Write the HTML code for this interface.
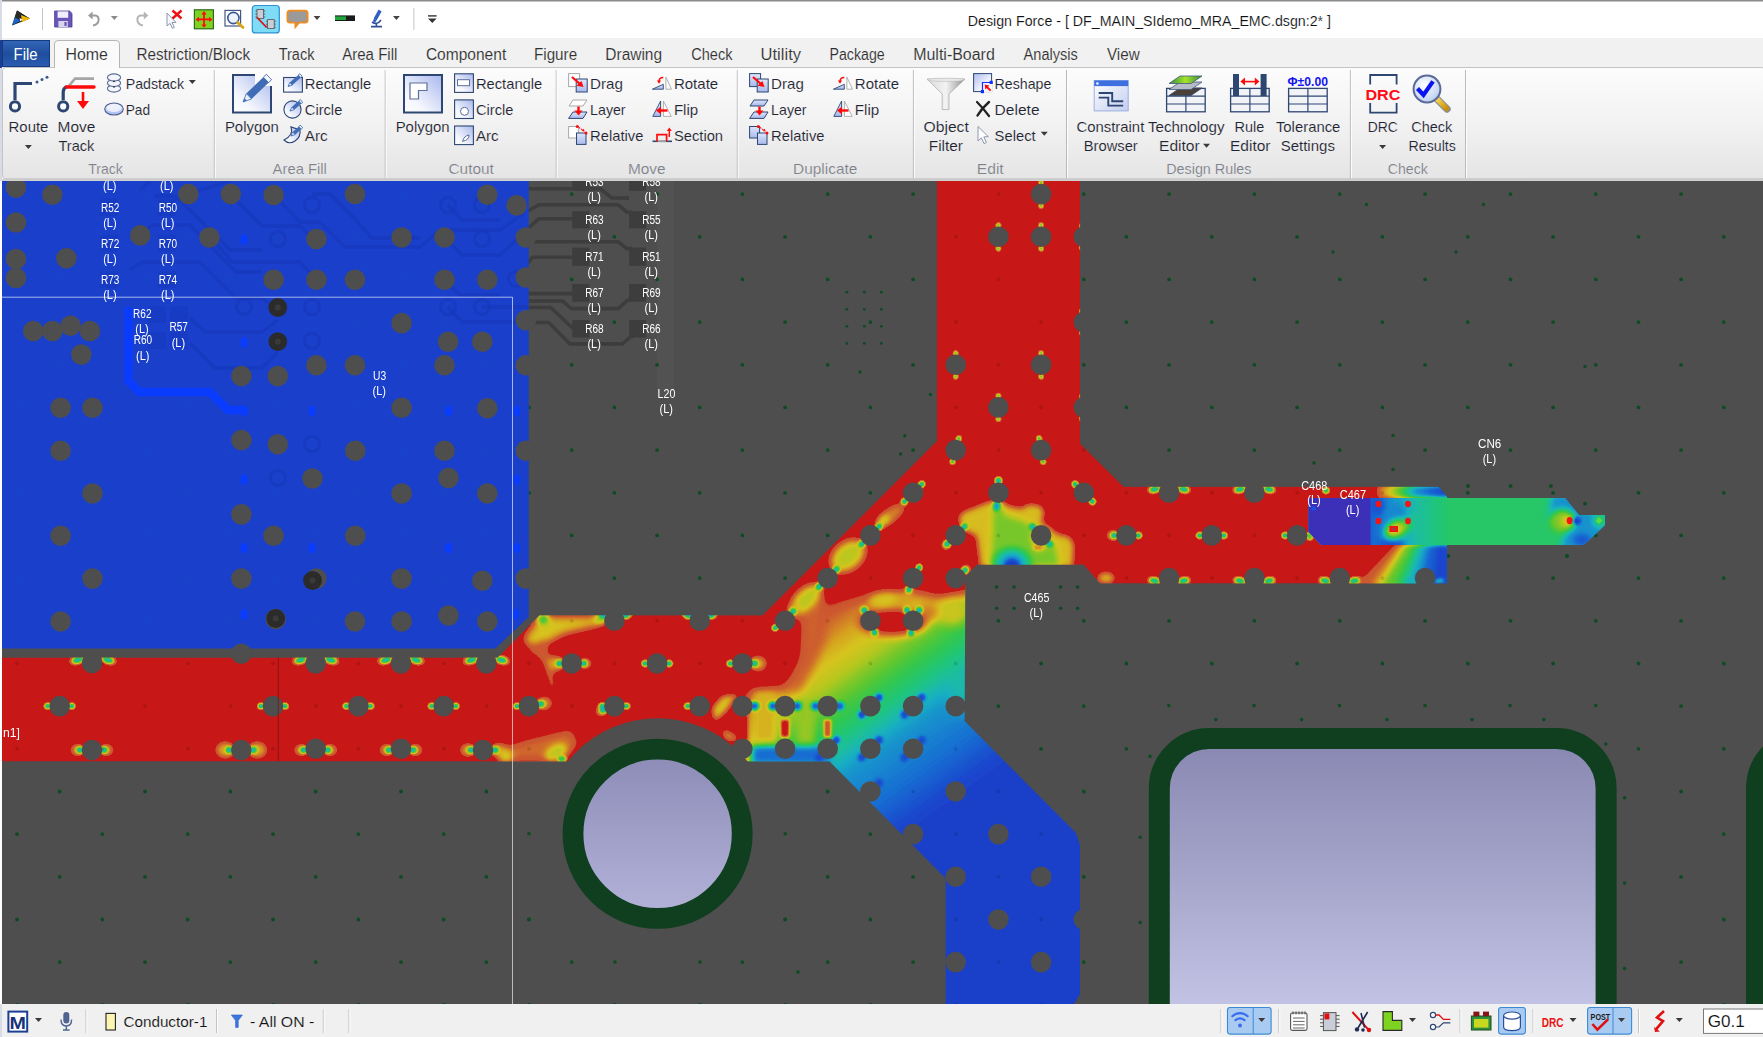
<!DOCTYPE html>
<html><head><meta charset="utf-8"><title>Design Force</title>
<style>
html,body{margin:0;padding:0;}
body{width:1763px;height:1037px;overflow:hidden;position:relative;background:#fff;font-family:"Liberation Sans",sans-serif;}
.abs{position:absolute}


</style></head><body>
<svg class="abs" style="left:0;top:0" width="1763" height="1037" viewBox="0 0 1763 1037">
<defs>
<clipPath id="cv"><rect x="2" y="180.5" width="1761" height="823.5"/></clipPath>
<clipPath id="redc"><polygon points="2,657.5 497.6,657.5 539.4,615.2 762.5,615.2 936.8,440.9 936.8,180 1080.2,180 1080.2,443.7 1123.8,486.8 1438.7,486.8 1447,496.4 1447,583.4 1100,583.4 1083.5,564.8 977,564.8 965.4,576.5 964.6,721 1076,833 1080,845 1080,994 1074,1004 945.7,1004 945.7,878.5 829.6,761.6 2,761.6"/></clipPath>
<clipPath id="bluec"><polygon points="2,180 528.8,180 528.8,617 495.5,648.4 2,648.4"/></clipPath>
<linearGradient id="lav" gradientUnits="userSpaceOnUse" x1="0" y1="749" x2="0" y2="1004"><stop offset="0" stop-color="#8989b3"/><stop offset="1" stop-color="#c2c2e4"/></linearGradient>
<linearGradient id="lav2" gradientUnits="userSpaceOnUse" x1="0" y1="759" x2="0" y2="908"><stop offset="0" stop-color="#8d8db8"/><stop offset="1" stop-color="#b1b1d8"/></linearGradient>
<filter id="b3" x="-50%" y="-50%" width="200%" height="200%"><feGaussianBlur stdDeviation="3"/></filter>
<filter id="b5" x="-50%" y="-50%" width="200%" height="200%"><feGaussianBlur stdDeviation="5"/></filter>
<filter id="b8" x="-50%" y="-50%" width="200%" height="200%"><feGaussianBlur stdDeviation="8"/></filter>
<filter id="b12" x="-50%" y="-50%" width="200%" height="200%"><feGaussianBlur stdDeviation="12"/></filter>
<filter id="b2" x="-50%" y="-50%" width="200%" height="200%"><feGaussianBlur stdDeviation="1.6"/></filter>
<filter id="cm" x="0" y="0" width="1763" height="1037" filterUnits="userSpaceOnUse" color-interpolation-filters="sRGB"><feComponentTransfer><feFuncR type="table" tableValues="0.102 0.102 0.102 0.102 0.102 0.102 0.102 0.102 0.102 0.102 0.102 0.102 0.102 0.102 0.102 0.102 0.102 0.102 0.102 0.102 0.102 0.102 0.102 0.102 0.102 0.101 0.101 0.100 0.100 0.100 0.099 0.099 0.098 0.098 0.097 0.097 0.096 0.096 0.095 0.095 0.094 0.094 0.094 0.094 0.094 0.094 0.094 0.094 0.094 0.094 0.094 0.094 0.094 0.094 0.094 0.094 0.094 0.094 0.094 0.094 0.094 0.094 0.094 0.094 0.094 0.094 0.094 0.094 0.094 0.094 0.094 0.096 0.097 0.099 0.100 0.102 0.104 0.105 0.107 0.108 0.110 0.111 0.113 0.115 0.116 0.118 0.119 0.121 0.122 0.124 0.125 0.133 0.140 0.147 0.154 0.161 0.168 0.175 0.182 0.189 0.196 0.212 0.227 0.243 0.259 0.275 0.290 0.306 0.322 0.337 0.353 0.369 0.384 0.400 0.416 0.431 0.447 0.463 0.478 0.494 0.510 0.529 0.549 0.569 0.588 0.608 0.627 0.647 0.667 0.686 0.706 0.720 0.733 0.747 0.761 0.775 0.788 0.802 0.816 0.829 0.843 0.843 0.843 0.843 0.843 0.843 0.843 0.843 0.843 0.843 0.843 0.841 0.839 0.837 0.835 0.833 0.831 0.829 0.827 0.825 0.824 0.821 0.819 0.816 0.814 0.811 0.809 0.806 0.804 0.803 0.802 0.801 0.800 0.800 0.799 0.798 0.797 0.796 0.792 0.788 0.784 0.784 0.784 0.784 0.784 0.784 0.784 0.784 0.784 0.784 0.784 0.784 0.784 0.784 0.784 0.784 0.784 0.784 0.784 0.784 0.784"/><feFuncG type="table" tableValues="0.251 0.251 0.251 0.251 0.251 0.251 0.251 0.251 0.251 0.251 0.251 0.251 0.251 0.255 0.259 0.263 0.267 0.271 0.275 0.278 0.282 0.286 0.290 0.294 0.298 0.304 0.310 0.316 0.322 0.327 0.333 0.339 0.345 0.351 0.357 0.363 0.369 0.375 0.380 0.386 0.392 0.402 0.412 0.422 0.431 0.441 0.451 0.461 0.471 0.480 0.490 0.500 0.510 0.520 0.529 0.539 0.549 0.559 0.569 0.578 0.588 0.598 0.608 0.618 0.627 0.637 0.647 0.657 0.667 0.676 0.686 0.692 0.698 0.704 0.710 0.716 0.722 0.727 0.733 0.739 0.745 0.748 0.751 0.755 0.758 0.761 0.764 0.767 0.770 0.773 0.776 0.777 0.778 0.779 0.780 0.780 0.781 0.782 0.783 0.784 0.784 0.784 0.784 0.784 0.784 0.784 0.784 0.784 0.784 0.784 0.784 0.784 0.784 0.784 0.784 0.784 0.784 0.784 0.784 0.784 0.784 0.784 0.784 0.784 0.784 0.784 0.784 0.784 0.784 0.784 0.784 0.782 0.780 0.778 0.776 0.775 0.773 0.771 0.769 0.767 0.765 0.751 0.737 0.724 0.710 0.696 0.682 0.669 0.655 0.641 0.627 0.612 0.596 0.580 0.565 0.549 0.533 0.518 0.502 0.486 0.471 0.456 0.441 0.426 0.412 0.397 0.382 0.368 0.353 0.350 0.348 0.345 0.342 0.340 0.337 0.335 0.332 0.329 0.251 0.173 0.094 0.094 0.094 0.094 0.094 0.094 0.094 0.094 0.094 0.094 0.094 0.094 0.094 0.094 0.094 0.094 0.094 0.094 0.094 0.094 0.094"/><feFuncB type="table" tableValues="0.796 0.796 0.796 0.796 0.796 0.796 0.796 0.796 0.796 0.796 0.796 0.796 0.796 0.797 0.798 0.799 0.800 0.801 0.802 0.803 0.804 0.805 0.806 0.807 0.808 0.809 0.810 0.811 0.812 0.813 0.814 0.815 0.816 0.817 0.818 0.819 0.820 0.821 0.822 0.823 0.824 0.823 0.822 0.822 0.821 0.821 0.820 0.820 0.819 0.818 0.818 0.817 0.817 0.816 0.816 0.812 0.809 0.806 0.803 0.800 0.797 0.793 0.790 0.787 0.784 0.781 0.777 0.774 0.771 0.768 0.765 0.751 0.737 0.724 0.710 0.696 0.682 0.669 0.655 0.641 0.627 0.612 0.596 0.580 0.565 0.549 0.533 0.518 0.502 0.486 0.471 0.455 0.439 0.424 0.408 0.392 0.376 0.361 0.345 0.329 0.314 0.302 0.290 0.278 0.267 0.255 0.243 0.231 0.220 0.208 0.196 0.192 0.188 0.184 0.180 0.176 0.173 0.169 0.165 0.161 0.157 0.153 0.149 0.145 0.141 0.137 0.133 0.129 0.125 0.122 0.118 0.118 0.118 0.118 0.118 0.118 0.118 0.118 0.118 0.118 0.118 0.118 0.119 0.120 0.121 0.122 0.122 0.123 0.124 0.125 0.125 0.129 0.132 0.135 0.138 0.141 0.144 0.147 0.151 0.154 0.157 0.161 0.165 0.169 0.173 0.176 0.180 0.184 0.188 0.188 0.188 0.188 0.188 0.188 0.188 0.188 0.188 0.188 0.157 0.125 0.094 0.094 0.094 0.094 0.094 0.094 0.094 0.094 0.094 0.094 0.094 0.094 0.094 0.094 0.094 0.094 0.094 0.094 0.094 0.094 0.094"/></feComponentTransfer></filter>
</defs>
<g clip-path="url(#cv)">
<rect x="0" y="180.5" width="1763" height="823.5" fill="#4e4e4e"/>
<rect x="657" y="181" width="17" height="215" fill="#525252"/><rect x="572.2" y="178" width="17.2" height="12.8" fill="#3d3d3d"/><rect x="572.2" y="211.2" width="17.2" height="17.1" fill="#3d3d3d"/><rect x="572.2" y="247.6" width="17.2" height="18.2" fill="#3d3d3d"/><rect x="572.2" y="284" width="17.2" height="17.7" fill="#3d3d3d"/><rect x="572.2" y="320" width="17.2" height="17.5" fill="#3d3d3d"/><rect x="629" y="178" width="17.2" height="12.8" fill="#3d3d3d"/><rect x="629" y="211.2" width="17.2" height="17.1" fill="#3d3d3d"/><rect x="629" y="247.6" width="17.2" height="18.2" fill="#3d3d3d"/><rect x="629" y="284" width="17.2" height="17.7" fill="#3d3d3d"/><rect x="629" y="320" width="17.2" height="17.5" fill="#3d3d3d"/><polyline points="487.3,194.7 498.4,188.7 572,188.7" fill="none" stroke="#3d3d3d" stroke-width="3.6" stroke-linejoin="round"/><polyline points="524,213.3 539,204.8 618.3,204.8 626.8,212.2 632,212.2" fill="none" stroke="#3d3d3d" stroke-width="3.6" stroke-linejoin="round"/><polyline points="520.9,234.7 539,218.7 574,218.7" fill="none" stroke="#3d3d3d" stroke-width="3.6" stroke-linejoin="round"/><polyline points="524,247.6 530.5,241.8 618.3,241.8 626.8,248.6 632,248.6" fill="none" stroke="#3d3d3d" stroke-width="3.6" stroke-linejoin="round"/><polyline points="521,272 532.6,257.2 574,257.2" fill="none" stroke="#3d3d3d" stroke-width="3.6" stroke-linejoin="round"/><polyline points="489.8,278.6 502.7,293.6 574,293.6" fill="none" stroke="#3d3d3d" stroke-width="3.6" stroke-linejoin="round"/><polyline points="528.4,301 562.6,301 571.2,308.6 618.3,308.6 627.9,300 632,300" fill="none" stroke="#3d3d3d" stroke-width="3.6" stroke-linejoin="round"/><polyline points="528.4,307.5 550.8,307.5 572.2,327.8 576,327.8" fill="none" stroke="#3d3d3d" stroke-width="3.6" stroke-linejoin="round"/><polyline points="520.9,322.5 548.7,322.5 570,343.9 622.5,343.9 631,336.4 634,336.4" fill="none" stroke="#3d3d3d" stroke-width="3.6" stroke-linejoin="round"/><polyline points="589,188.7 600,188.7 612,198 629,198" fill="none" stroke="#3d3d3d" stroke-width="3.6" stroke-linejoin="round"/>
<g fill="#0e4a24"><circle cx="17.0" cy="151.4" r="1.9"/><circle cx="102.3" cy="151.4" r="1.9"/><circle cx="187.7" cy="151.4" r="1.9"/><circle cx="273.0" cy="151.4" r="1.9"/><circle cx="358.4" cy="151.4" r="1.9"/><circle cx="443.7" cy="151.4" r="1.9"/><circle cx="529.0" cy="151.4" r="1.9"/><circle cx="614.4" cy="151.4" r="1.9"/><circle cx="699.7" cy="151.4" r="1.9"/><circle cx="785.1" cy="151.4" r="1.9"/><circle cx="870.4" cy="151.4" r="1.9"/><circle cx="955.7" cy="151.4" r="1.9"/><circle cx="1041.1" cy="151.4" r="1.9"/><circle cx="1126.4" cy="151.4" r="1.9"/><circle cx="1211.8" cy="151.4" r="1.9"/><circle cx="1297.1" cy="151.4" r="1.9"/><circle cx="1382.4" cy="151.4" r="1.9"/><circle cx="1467.8" cy="151.4" r="1.9"/><circle cx="1553.1" cy="151.4" r="1.9"/><circle cx="1638.5" cy="151.4" r="1.9"/><circle cx="1723.8" cy="151.4" r="1.9"/><circle cx="59.7" cy="194.1" r="1.9"/><circle cx="145.0" cy="194.1" r="1.9"/><circle cx="230.4" cy="194.1" r="1.9"/><circle cx="315.7" cy="194.1" r="1.9"/><circle cx="401.0" cy="194.1" r="1.9"/><circle cx="486.4" cy="194.1" r="1.9"/><circle cx="571.7" cy="194.1" r="1.9"/><circle cx="657.1" cy="194.1" r="1.9"/><circle cx="742.4" cy="194.1" r="1.9"/><circle cx="827.7" cy="194.1" r="1.9"/><circle cx="913.1" cy="194.1" r="1.9"/><circle cx="998.4" cy="194.1" r="1.9"/><circle cx="1083.8" cy="194.1" r="1.9"/><circle cx="1169.1" cy="194.1" r="1.9"/><circle cx="1254.4" cy="194.1" r="1.9"/><circle cx="1339.8" cy="194.1" r="1.9"/><circle cx="1425.1" cy="194.1" r="1.9"/><circle cx="1510.5" cy="194.1" r="1.9"/><circle cx="1595.8" cy="194.1" r="1.9"/><circle cx="1681.1" cy="194.1" r="1.9"/><circle cx="1766.5" cy="194.1" r="1.9"/><circle cx="17.0" cy="236.8" r="1.9"/><circle cx="102.3" cy="236.8" r="1.9"/><circle cx="187.7" cy="236.8" r="1.9"/><circle cx="273.0" cy="236.8" r="1.9"/><circle cx="358.4" cy="236.8" r="1.9"/><circle cx="443.7" cy="236.8" r="1.9"/><circle cx="529.0" cy="236.8" r="1.9"/><circle cx="614.4" cy="236.8" r="1.9"/><circle cx="699.7" cy="236.8" r="1.9"/><circle cx="785.1" cy="236.8" r="1.9"/><circle cx="870.4" cy="236.8" r="1.9"/><circle cx="955.7" cy="236.8" r="1.9"/><circle cx="1041.1" cy="236.8" r="1.9"/><circle cx="1126.4" cy="236.8" r="1.9"/><circle cx="1211.8" cy="236.8" r="1.9"/><circle cx="1297.1" cy="236.8" r="1.9"/><circle cx="1382.4" cy="236.8" r="1.9"/><circle cx="1467.8" cy="236.8" r="1.9"/><circle cx="1553.1" cy="236.8" r="1.9"/><circle cx="1638.5" cy="236.8" r="1.9"/><circle cx="1723.8" cy="236.8" r="1.9"/><circle cx="59.7" cy="279.4" r="1.9"/><circle cx="145.0" cy="279.4" r="1.9"/><circle cx="230.4" cy="279.4" r="1.9"/><circle cx="315.7" cy="279.4" r="1.9"/><circle cx="401.0" cy="279.4" r="1.9"/><circle cx="486.4" cy="279.4" r="1.9"/><circle cx="571.7" cy="279.4" r="1.9"/><circle cx="657.1" cy="279.4" r="1.9"/><circle cx="742.4" cy="279.4" r="1.9"/><circle cx="827.7" cy="279.4" r="1.9"/><circle cx="913.1" cy="279.4" r="1.9"/><circle cx="998.4" cy="279.4" r="1.9"/><circle cx="1083.8" cy="279.4" r="1.9"/><circle cx="1169.1" cy="279.4" r="1.9"/><circle cx="1254.4" cy="279.4" r="1.9"/><circle cx="1339.8" cy="279.4" r="1.9"/><circle cx="1425.1" cy="279.4" r="1.9"/><circle cx="1510.5" cy="279.4" r="1.9"/><circle cx="1595.8" cy="279.4" r="1.9"/><circle cx="1681.1" cy="279.4" r="1.9"/><circle cx="1766.5" cy="279.4" r="1.9"/><circle cx="17.0" cy="322.1" r="1.9"/><circle cx="102.3" cy="322.1" r="1.9"/><circle cx="187.7" cy="322.1" r="1.9"/><circle cx="273.0" cy="322.1" r="1.9"/><circle cx="358.4" cy="322.1" r="1.9"/><circle cx="443.7" cy="322.1" r="1.9"/><circle cx="529.0" cy="322.1" r="1.9"/><circle cx="614.4" cy="322.1" r="1.9"/><circle cx="699.7" cy="322.1" r="1.9"/><circle cx="785.1" cy="322.1" r="1.9"/><circle cx="870.4" cy="322.1" r="1.9"/><circle cx="955.7" cy="322.1" r="1.9"/><circle cx="1041.1" cy="322.1" r="1.9"/><circle cx="1126.4" cy="322.1" r="1.9"/><circle cx="1211.8" cy="322.1" r="1.9"/><circle cx="1297.1" cy="322.1" r="1.9"/><circle cx="1382.4" cy="322.1" r="1.9"/><circle cx="1467.8" cy="322.1" r="1.9"/><circle cx="1553.1" cy="322.1" r="1.9"/><circle cx="1638.5" cy="322.1" r="1.9"/><circle cx="1723.8" cy="322.1" r="1.9"/><circle cx="59.7" cy="364.8" r="1.9"/><circle cx="145.0" cy="364.8" r="1.9"/><circle cx="230.4" cy="364.8" r="1.9"/><circle cx="315.7" cy="364.8" r="1.9"/><circle cx="401.0" cy="364.8" r="1.9"/><circle cx="486.4" cy="364.8" r="1.9"/><circle cx="571.7" cy="364.8" r="1.9"/><circle cx="657.1" cy="364.8" r="1.9"/><circle cx="742.4" cy="364.8" r="1.9"/><circle cx="827.7" cy="364.8" r="1.9"/><circle cx="913.1" cy="364.8" r="1.9"/><circle cx="998.4" cy="364.8" r="1.9"/><circle cx="1083.8" cy="364.8" r="1.9"/><circle cx="1169.1" cy="364.8" r="1.9"/><circle cx="1254.4" cy="364.8" r="1.9"/><circle cx="1339.8" cy="364.8" r="1.9"/><circle cx="1425.1" cy="364.8" r="1.9"/><circle cx="1510.5" cy="364.8" r="1.9"/><circle cx="1595.8" cy="364.8" r="1.9"/><circle cx="1681.1" cy="364.8" r="1.9"/><circle cx="1766.5" cy="364.8" r="1.9"/><circle cx="17.0" cy="407.4" r="1.9"/><circle cx="102.3" cy="407.4" r="1.9"/><circle cx="187.7" cy="407.4" r="1.9"/><circle cx="273.0" cy="407.4" r="1.9"/><circle cx="358.4" cy="407.4" r="1.9"/><circle cx="443.7" cy="407.4" r="1.9"/><circle cx="529.0" cy="407.4" r="1.9"/><circle cx="614.4" cy="407.4" r="1.9"/><circle cx="699.7" cy="407.4" r="1.9"/><circle cx="785.1" cy="407.4" r="1.9"/><circle cx="870.4" cy="407.4" r="1.9"/><circle cx="955.7" cy="407.4" r="1.9"/><circle cx="1041.1" cy="407.4" r="1.9"/><circle cx="1126.4" cy="407.4" r="1.9"/><circle cx="1211.8" cy="407.4" r="1.9"/><circle cx="1297.1" cy="407.4" r="1.9"/><circle cx="1382.4" cy="407.4" r="1.9"/><circle cx="1467.8" cy="407.4" r="1.9"/><circle cx="1553.1" cy="407.4" r="1.9"/><circle cx="1638.5" cy="407.4" r="1.9"/><circle cx="1723.8" cy="407.4" r="1.9"/><circle cx="59.7" cy="450.1" r="1.9"/><circle cx="145.0" cy="450.1" r="1.9"/><circle cx="230.4" cy="450.1" r="1.9"/><circle cx="315.7" cy="450.1" r="1.9"/><circle cx="401.0" cy="450.1" r="1.9"/><circle cx="486.4" cy="450.1" r="1.9"/><circle cx="571.7" cy="450.1" r="1.9"/><circle cx="657.1" cy="450.1" r="1.9"/><circle cx="742.4" cy="450.1" r="1.9"/><circle cx="827.7" cy="450.1" r="1.9"/><circle cx="913.1" cy="450.1" r="1.9"/><circle cx="998.4" cy="450.1" r="1.9"/><circle cx="1083.8" cy="450.1" r="1.9"/><circle cx="1169.1" cy="450.1" r="1.9"/><circle cx="1254.4" cy="450.1" r="1.9"/><circle cx="1339.8" cy="450.1" r="1.9"/><circle cx="1425.1" cy="450.1" r="1.9"/><circle cx="1510.5" cy="450.1" r="1.9"/><circle cx="1595.8" cy="450.1" r="1.9"/><circle cx="1681.1" cy="450.1" r="1.9"/><circle cx="1766.5" cy="450.1" r="1.9"/><circle cx="17.0" cy="492.8" r="1.9"/><circle cx="102.3" cy="492.8" r="1.9"/><circle cx="187.7" cy="492.8" r="1.9"/><circle cx="273.0" cy="492.8" r="1.9"/><circle cx="358.4" cy="492.8" r="1.9"/><circle cx="443.7" cy="492.8" r="1.9"/><circle cx="529.0" cy="492.8" r="1.9"/><circle cx="614.4" cy="492.8" r="1.9"/><circle cx="699.7" cy="492.8" r="1.9"/><circle cx="785.1" cy="492.8" r="1.9"/><circle cx="870.4" cy="492.8" r="1.9"/><circle cx="955.7" cy="492.8" r="1.9"/><circle cx="1041.1" cy="492.8" r="1.9"/><circle cx="1126.4" cy="492.8" r="1.9"/><circle cx="1211.8" cy="492.8" r="1.9"/><circle cx="1297.1" cy="492.8" r="1.9"/><circle cx="1382.4" cy="492.8" r="1.9"/><circle cx="1467.8" cy="492.8" r="1.9"/><circle cx="1553.1" cy="492.8" r="1.9"/><circle cx="1638.5" cy="492.8" r="1.9"/><circle cx="1723.8" cy="492.8" r="1.9"/><circle cx="59.7" cy="535.4" r="1.9"/><circle cx="145.0" cy="535.4" r="1.9"/><circle cx="230.4" cy="535.4" r="1.9"/><circle cx="315.7" cy="535.4" r="1.9"/><circle cx="401.0" cy="535.4" r="1.9"/><circle cx="486.4" cy="535.4" r="1.9"/><circle cx="571.7" cy="535.4" r="1.9"/><circle cx="657.1" cy="535.4" r="1.9"/><circle cx="742.4" cy="535.4" r="1.9"/><circle cx="827.7" cy="535.4" r="1.9"/><circle cx="913.1" cy="535.4" r="1.9"/><circle cx="998.4" cy="535.4" r="1.9"/><circle cx="1083.8" cy="535.4" r="1.9"/><circle cx="1169.1" cy="535.4" r="1.9"/><circle cx="1254.4" cy="535.4" r="1.9"/><circle cx="1339.8" cy="535.4" r="1.9"/><circle cx="1425.1" cy="535.4" r="1.9"/><circle cx="1510.5" cy="535.4" r="1.9"/><circle cx="1595.8" cy="535.4" r="1.9"/><circle cx="1681.1" cy="535.4" r="1.9"/><circle cx="1766.5" cy="535.4" r="1.9"/><circle cx="17.0" cy="578.1" r="1.9"/><circle cx="102.3" cy="578.1" r="1.9"/><circle cx="187.7" cy="578.1" r="1.9"/><circle cx="273.0" cy="578.1" r="1.9"/><circle cx="358.4" cy="578.1" r="1.9"/><circle cx="443.7" cy="578.1" r="1.9"/><circle cx="529.0" cy="578.1" r="1.9"/><circle cx="614.4" cy="578.1" r="1.9"/><circle cx="699.7" cy="578.1" r="1.9"/><circle cx="785.1" cy="578.1" r="1.9"/><circle cx="870.4" cy="578.1" r="1.9"/><circle cx="955.7" cy="578.1" r="1.9"/><circle cx="1126.4" cy="578.1" r="1.9"/><circle cx="1211.8" cy="578.1" r="1.9"/><circle cx="1297.1" cy="578.1" r="1.9"/><circle cx="1382.4" cy="578.1" r="1.9"/><circle cx="1467.8" cy="578.1" r="1.9"/><circle cx="1553.1" cy="578.1" r="1.9"/><circle cx="1638.5" cy="578.1" r="1.9"/><circle cx="1723.8" cy="578.1" r="1.9"/><circle cx="59.7" cy="620.8" r="1.9"/><circle cx="145.0" cy="620.8" r="1.9"/><circle cx="230.4" cy="620.8" r="1.9"/><circle cx="315.7" cy="620.8" r="1.9"/><circle cx="401.0" cy="620.8" r="1.9"/><circle cx="486.4" cy="620.8" r="1.9"/><circle cx="571.7" cy="620.8" r="1.9"/><circle cx="657.1" cy="620.8" r="1.9"/><circle cx="742.4" cy="620.8" r="1.9"/><circle cx="827.7" cy="620.8" r="1.9"/><circle cx="913.1" cy="620.8" r="1.9"/><circle cx="998.4" cy="620.8" r="1.9"/><circle cx="1083.8" cy="620.8" r="1.9"/><circle cx="1169.1" cy="620.8" r="1.9"/><circle cx="1254.4" cy="620.8" r="1.9"/><circle cx="1339.8" cy="620.8" r="1.9"/><circle cx="1425.1" cy="620.8" r="1.9"/><circle cx="1510.5" cy="620.8" r="1.9"/><circle cx="1595.8" cy="620.8" r="1.9"/><circle cx="1681.1" cy="620.8" r="1.9"/><circle cx="1766.5" cy="620.8" r="1.9"/><circle cx="17.0" cy="663.5" r="1.9"/><circle cx="102.3" cy="663.5" r="1.9"/><circle cx="187.7" cy="663.5" r="1.9"/><circle cx="273.0" cy="663.5" r="1.9"/><circle cx="358.4" cy="663.5" r="1.9"/><circle cx="443.7" cy="663.5" r="1.9"/><circle cx="529.0" cy="663.5" r="1.9"/><circle cx="614.4" cy="663.5" r="1.9"/><circle cx="699.7" cy="663.5" r="1.9"/><circle cx="785.1" cy="663.5" r="1.9"/><circle cx="870.4" cy="663.5" r="1.9"/><circle cx="955.7" cy="663.5" r="1.9"/><circle cx="1041.1" cy="663.5" r="1.9"/><circle cx="1126.4" cy="663.5" r="1.9"/><circle cx="1211.8" cy="663.5" r="1.9"/><circle cx="1297.1" cy="663.5" r="1.9"/><circle cx="1382.4" cy="663.5" r="1.9"/><circle cx="1467.8" cy="663.5" r="1.9"/><circle cx="1553.1" cy="663.5" r="1.9"/><circle cx="1638.5" cy="663.5" r="1.9"/><circle cx="1723.8" cy="663.5" r="1.9"/><circle cx="59.7" cy="706.1" r="1.9"/><circle cx="145.0" cy="706.1" r="1.9"/><circle cx="230.4" cy="706.1" r="1.9"/><circle cx="315.7" cy="706.1" r="1.9"/><circle cx="401.0" cy="706.1" r="1.9"/><circle cx="486.4" cy="706.1" r="1.9"/><circle cx="571.7" cy="706.1" r="1.9"/><circle cx="742.4" cy="706.1" r="1.9"/><circle cx="827.7" cy="706.1" r="1.9"/><circle cx="913.1" cy="706.1" r="1.9"/><circle cx="998.4" cy="706.1" r="1.9"/><circle cx="1083.8" cy="706.1" r="1.9"/><circle cx="1681.1" cy="706.1" r="1.9"/><circle cx="1766.5" cy="706.1" r="1.9"/><circle cx="17.0" cy="748.8" r="1.9"/><circle cx="102.3" cy="748.8" r="1.9"/><circle cx="187.7" cy="748.8" r="1.9"/><circle cx="273.0" cy="748.8" r="1.9"/><circle cx="358.4" cy="748.8" r="1.9"/><circle cx="443.7" cy="748.8" r="1.9"/><circle cx="529.0" cy="748.8" r="1.9"/><circle cx="785.1" cy="748.8" r="1.9"/><circle cx="870.4" cy="748.8" r="1.9"/><circle cx="955.7" cy="748.8" r="1.9"/><circle cx="1041.1" cy="748.8" r="1.9"/><circle cx="1723.8" cy="748.8" r="1.9"/><circle cx="59.7" cy="791.5" r="1.9"/><circle cx="145.0" cy="791.5" r="1.9"/><circle cx="230.4" cy="791.5" r="1.9"/><circle cx="315.7" cy="791.5" r="1.9"/><circle cx="401.0" cy="791.5" r="1.9"/><circle cx="486.4" cy="791.5" r="1.9"/><circle cx="827.7" cy="791.5" r="1.9"/><circle cx="913.1" cy="791.5" r="1.9"/><circle cx="998.4" cy="791.5" r="1.9"/><circle cx="1083.8" cy="791.5" r="1.9"/><circle cx="1681.1" cy="791.5" r="1.9"/><circle cx="1766.5" cy="791.5" r="1.9"/><circle cx="17.0" cy="834.1" r="1.9"/><circle cx="102.3" cy="834.1" r="1.9"/><circle cx="187.7" cy="834.1" r="1.9"/><circle cx="273.0" cy="834.1" r="1.9"/><circle cx="358.4" cy="834.1" r="1.9"/><circle cx="443.7" cy="834.1" r="1.9"/><circle cx="870.4" cy="834.1" r="1.9"/><circle cx="955.7" cy="834.1" r="1.9"/><circle cx="1041.1" cy="834.1" r="1.9"/><circle cx="1723.8" cy="834.1" r="1.9"/><circle cx="59.7" cy="876.8" r="1.9"/><circle cx="145.0" cy="876.8" r="1.9"/><circle cx="230.4" cy="876.8" r="1.9"/><circle cx="315.7" cy="876.8" r="1.9"/><circle cx="401.0" cy="876.8" r="1.9"/><circle cx="486.4" cy="876.8" r="1.9"/><circle cx="827.7" cy="876.8" r="1.9"/><circle cx="913.1" cy="876.8" r="1.9"/><circle cx="998.4" cy="876.8" r="1.9"/><circle cx="1083.8" cy="876.8" r="1.9"/><circle cx="1681.1" cy="876.8" r="1.9"/><circle cx="1766.5" cy="876.8" r="1.9"/><circle cx="17.0" cy="919.5" r="1.9"/><circle cx="102.3" cy="919.5" r="1.9"/><circle cx="187.7" cy="919.5" r="1.9"/><circle cx="273.0" cy="919.5" r="1.9"/><circle cx="358.4" cy="919.5" r="1.9"/><circle cx="443.7" cy="919.5" r="1.9"/><circle cx="529.0" cy="919.5" r="1.9"/><circle cx="785.1" cy="919.5" r="1.9"/><circle cx="870.4" cy="919.5" r="1.9"/><circle cx="955.7" cy="919.5" r="1.9"/><circle cx="1041.1" cy="919.5" r="1.9"/><circle cx="1723.8" cy="919.5" r="1.9"/><circle cx="59.7" cy="962.1" r="1.9"/><circle cx="145.0" cy="962.1" r="1.9"/><circle cx="230.4" cy="962.1" r="1.9"/><circle cx="315.7" cy="962.1" r="1.9"/><circle cx="401.0" cy="962.1" r="1.9"/><circle cx="486.4" cy="962.1" r="1.9"/><circle cx="571.7" cy="962.1" r="1.9"/><circle cx="742.4" cy="962.1" r="1.9"/><circle cx="827.7" cy="962.1" r="1.9"/><circle cx="913.1" cy="962.1" r="1.9"/><circle cx="998.4" cy="962.1" r="1.9"/><circle cx="1083.8" cy="962.1" r="1.9"/><circle cx="1681.1" cy="962.1" r="1.9"/><circle cx="1766.5" cy="962.1" r="1.9"/><circle cx="17.0" cy="1004.8" r="1.9"/><circle cx="102.3" cy="1004.8" r="1.9"/><circle cx="187.7" cy="1004.8" r="1.9"/><circle cx="273.0" cy="1004.8" r="1.9"/><circle cx="358.4" cy="1004.8" r="1.9"/><circle cx="443.7" cy="1004.8" r="1.9"/><circle cx="529.0" cy="1004.8" r="1.9"/><circle cx="614.4" cy="1004.8" r="1.9"/><circle cx="699.7" cy="1004.8" r="1.9"/><circle cx="785.1" cy="1004.8" r="1.9"/><circle cx="870.4" cy="1004.8" r="1.9"/><circle cx="955.7" cy="1004.8" r="1.9"/><circle cx="1041.1" cy="1004.8" r="1.9"/><circle cx="1723.8" cy="1004.8" r="1.9"/><circle cx="846.9" cy="292.2" r="1.4"/><circle cx="846.9" cy="309.3" r="1.4"/><circle cx="846.9" cy="326.3" r="1.4"/><circle cx="846.9" cy="343.4" r="1.4"/><circle cx="864.3" cy="292.2" r="1.4"/><circle cx="864.3" cy="309.3" r="1.4"/><circle cx="864.3" cy="326.3" r="1.4"/><circle cx="864.3" cy="343.4" r="1.4"/><circle cx="881.4" cy="292.2" r="1.4"/><circle cx="881.4" cy="309.3" r="1.4"/><circle cx="881.4" cy="326.3" r="1.4"/><circle cx="881.4" cy="343.4" r="1.4"/><circle cx="996.6" cy="587" r="1.8"/><circle cx="996.6" cy="608.2" r="1.8"/><circle cx="1014" cy="587" r="1.8"/><circle cx="1014" cy="608.2" r="1.8"/><circle cx="1060.6" cy="587" r="1.8"/><circle cx="1060.6" cy="608.2" r="1.8"/><circle cx="1077.6" cy="587" r="1.8"/><circle cx="1077.6" cy="608.2" r="1.8"/><circle cx="1215.8" cy="719.6" r="1.8"/><circle cx="1301.6" cy="719.6" r="1.8"/><circle cx="1387" cy="719.6" r="1.8"/><circle cx="1472" cy="719.6" r="1.8"/><circle cx="1543.8" cy="719.6" r="1.8"/><circle cx="1168.8" cy="705.6" r="1.8"/><circle cx="1254" cy="705.6" r="1.8"/><circle cx="1339.5" cy="705.6" r="1.8"/><circle cx="1425" cy="705.6" r="1.8"/><circle cx="1510" cy="705.6" r="1.8"/><circle cx="1595.7" cy="705.6" r="1.8"/><circle cx="1126.3" cy="748.9" r="1.8"/><circle cx="1150" cy="756.4" r="1.8"/><circle cx="1605.8" cy="744" r="1.8"/><circle cx="1638.5" cy="748.9" r="1.8"/><circle cx="1624.6" cy="797.8" r="1.8"/><circle cx="1140.2" cy="837.3" r="1.8"/><circle cx="1624.6" cy="883.1" r="1.8"/><circle cx="1140.2" cy="922.6" r="1.8"/><circle cx="1624.6" cy="968.5" r="1.8"/><circle cx="585" cy="759" r="1.8"/><circle cx="740.5" cy="771.6" r="1.8"/><circle cx="529" cy="833.8" r="1.8"/><circle cx="553.9" cy="833.8" r="1.8"/><circle cx="762" cy="831.7" r="1.8"/><circle cx="785.3" cy="833.8" r="1.8"/><circle cx="580" cy="904.7" r="1.8"/><circle cx="731.4" cy="906.3" r="1.8"/><circle cx="657.6" cy="939.5" r="1.8"/><circle cx="657.6" cy="729.3" r="1.8"/><circle cx="572" cy="791.4" r="1.8"/><circle cx="743" cy="791.4" r="1.8"/><circle cx="572" cy="876.8" r="1.8"/><circle cx="743" cy="876.8" r="1.8"/><circle cx="615" cy="962.1" r="1.8"/><circle cx="700" cy="962.1" r="1.8"/><circle cx="529" cy="919.4" r="1.8"/><circle cx="785.3" cy="919.4" r="1.8"/><circle cx="1467.9" cy="485.9" r="1.9"/><circle cx="1510.6" cy="485.9" r="1.9"/><circle cx="1550.9" cy="485.9" r="1.9"/><circle cx="1585" cy="503.7" r="1.9"/><circle cx="1448.2" cy="556" r="1.9"/><circle cx="1567" cy="556" r="1.9"/><circle cx="860" cy="372" r="1.7"/><circle cx="930.4" cy="394.5" r="1.7"/><circle cx="904.8" cy="435.8" r="1.7"/><circle cx="900.6" cy="454" r="1.7"/><circle cx="1366.5" cy="204.5" r="1.7"/><circle cx="1483.5" cy="204.5" r="1.7"/><circle cx="1333" cy="252" r="1.7"/><circle cx="1456" cy="252" r="1.7"/><circle cx="1393" cy="435.5" r="1.7"/><circle cx="1314" cy="463" r="1.7"/><circle cx="1393" cy="469.5" r="1.7"/><circle cx="1585" cy="366.5" r="1.7"/><circle cx="1567" cy="556" r="1.7"/><circle cx="798" cy="972" r="1.8"/></g>
<polygon points="2,180 528.8,180 528.8,617 495.5,648.4 2,648.4" fill="#1a40cb"/>
<g clip-path="url(#bluec)" fill="#1446c4"><circle cx="17.0" cy="151.4" r="1.9"/><circle cx="102.3" cy="151.4" r="1.9"/><circle cx="187.7" cy="151.4" r="1.9"/><circle cx="273.0" cy="151.4" r="1.9"/><circle cx="358.4" cy="151.4" r="1.9"/><circle cx="443.7" cy="151.4" r="1.9"/><circle cx="529.0" cy="151.4" r="1.9"/><circle cx="614.4" cy="151.4" r="1.9"/><circle cx="699.7" cy="151.4" r="1.9"/><circle cx="785.1" cy="151.4" r="1.9"/><circle cx="870.4" cy="151.4" r="1.9"/><circle cx="955.7" cy="151.4" r="1.9"/><circle cx="1041.1" cy="151.4" r="1.9"/><circle cx="1126.4" cy="151.4" r="1.9"/><circle cx="1211.8" cy="151.4" r="1.9"/><circle cx="1297.1" cy="151.4" r="1.9"/><circle cx="1382.4" cy="151.4" r="1.9"/><circle cx="1467.8" cy="151.4" r="1.9"/><circle cx="1553.1" cy="151.4" r="1.9"/><circle cx="1638.5" cy="151.4" r="1.9"/><circle cx="1723.8" cy="151.4" r="1.9"/><circle cx="59.7" cy="194.1" r="1.9"/><circle cx="145.0" cy="194.1" r="1.9"/><circle cx="230.4" cy="194.1" r="1.9"/><circle cx="315.7" cy="194.1" r="1.9"/><circle cx="401.0" cy="194.1" r="1.9"/><circle cx="486.4" cy="194.1" r="1.9"/><circle cx="571.7" cy="194.1" r="1.9"/><circle cx="657.1" cy="194.1" r="1.9"/><circle cx="742.4" cy="194.1" r="1.9"/><circle cx="827.7" cy="194.1" r="1.9"/><circle cx="913.1" cy="194.1" r="1.9"/><circle cx="998.4" cy="194.1" r="1.9"/><circle cx="1083.8" cy="194.1" r="1.9"/><circle cx="1169.1" cy="194.1" r="1.9"/><circle cx="1254.4" cy="194.1" r="1.9"/><circle cx="1339.8" cy="194.1" r="1.9"/><circle cx="1425.1" cy="194.1" r="1.9"/><circle cx="1510.5" cy="194.1" r="1.9"/><circle cx="1595.8" cy="194.1" r="1.9"/><circle cx="1681.1" cy="194.1" r="1.9"/><circle cx="1766.5" cy="194.1" r="1.9"/><circle cx="17.0" cy="236.8" r="1.9"/><circle cx="102.3" cy="236.8" r="1.9"/><circle cx="187.7" cy="236.8" r="1.9"/><circle cx="273.0" cy="236.8" r="1.9"/><circle cx="358.4" cy="236.8" r="1.9"/><circle cx="443.7" cy="236.8" r="1.9"/><circle cx="529.0" cy="236.8" r="1.9"/><circle cx="614.4" cy="236.8" r="1.9"/><circle cx="699.7" cy="236.8" r="1.9"/><circle cx="785.1" cy="236.8" r="1.9"/><circle cx="870.4" cy="236.8" r="1.9"/><circle cx="955.7" cy="236.8" r="1.9"/><circle cx="1041.1" cy="236.8" r="1.9"/><circle cx="1126.4" cy="236.8" r="1.9"/><circle cx="1211.8" cy="236.8" r="1.9"/><circle cx="1297.1" cy="236.8" r="1.9"/><circle cx="1382.4" cy="236.8" r="1.9"/><circle cx="1467.8" cy="236.8" r="1.9"/><circle cx="1553.1" cy="236.8" r="1.9"/><circle cx="1638.5" cy="236.8" r="1.9"/><circle cx="1723.8" cy="236.8" r="1.9"/><circle cx="59.7" cy="279.4" r="1.9"/><circle cx="145.0" cy="279.4" r="1.9"/><circle cx="230.4" cy="279.4" r="1.9"/><circle cx="315.7" cy="279.4" r="1.9"/><circle cx="401.0" cy="279.4" r="1.9"/><circle cx="486.4" cy="279.4" r="1.9"/><circle cx="571.7" cy="279.4" r="1.9"/><circle cx="657.1" cy="279.4" r="1.9"/><circle cx="742.4" cy="279.4" r="1.9"/><circle cx="827.7" cy="279.4" r="1.9"/><circle cx="913.1" cy="279.4" r="1.9"/><circle cx="998.4" cy="279.4" r="1.9"/><circle cx="1083.8" cy="279.4" r="1.9"/><circle cx="1169.1" cy="279.4" r="1.9"/><circle cx="1254.4" cy="279.4" r="1.9"/><circle cx="1339.8" cy="279.4" r="1.9"/><circle cx="1425.1" cy="279.4" r="1.9"/><circle cx="1510.5" cy="279.4" r="1.9"/><circle cx="1595.8" cy="279.4" r="1.9"/><circle cx="1681.1" cy="279.4" r="1.9"/><circle cx="1766.5" cy="279.4" r="1.9"/><circle cx="17.0" cy="322.1" r="1.9"/><circle cx="102.3" cy="322.1" r="1.9"/><circle cx="187.7" cy="322.1" r="1.9"/><circle cx="273.0" cy="322.1" r="1.9"/><circle cx="358.4" cy="322.1" r="1.9"/><circle cx="443.7" cy="322.1" r="1.9"/><circle cx="529.0" cy="322.1" r="1.9"/><circle cx="614.4" cy="322.1" r="1.9"/><circle cx="699.7" cy="322.1" r="1.9"/><circle cx="785.1" cy="322.1" r="1.9"/><circle cx="870.4" cy="322.1" r="1.9"/><circle cx="955.7" cy="322.1" r="1.9"/><circle cx="1041.1" cy="322.1" r="1.9"/><circle cx="1126.4" cy="322.1" r="1.9"/><circle cx="1211.8" cy="322.1" r="1.9"/><circle cx="1297.1" cy="322.1" r="1.9"/><circle cx="1382.4" cy="322.1" r="1.9"/><circle cx="1467.8" cy="322.1" r="1.9"/><circle cx="1553.1" cy="322.1" r="1.9"/><circle cx="1638.5" cy="322.1" r="1.9"/><circle cx="1723.8" cy="322.1" r="1.9"/><circle cx="59.7" cy="364.8" r="1.9"/><circle cx="145.0" cy="364.8" r="1.9"/><circle cx="230.4" cy="364.8" r="1.9"/><circle cx="315.7" cy="364.8" r="1.9"/><circle cx="401.0" cy="364.8" r="1.9"/><circle cx="486.4" cy="364.8" r="1.9"/><circle cx="571.7" cy="364.8" r="1.9"/><circle cx="657.1" cy="364.8" r="1.9"/><circle cx="742.4" cy="364.8" r="1.9"/><circle cx="827.7" cy="364.8" r="1.9"/><circle cx="913.1" cy="364.8" r="1.9"/><circle cx="998.4" cy="364.8" r="1.9"/><circle cx="1083.8" cy="364.8" r="1.9"/><circle cx="1169.1" cy="364.8" r="1.9"/><circle cx="1254.4" cy="364.8" r="1.9"/><circle cx="1339.8" cy="364.8" r="1.9"/><circle cx="1425.1" cy="364.8" r="1.9"/><circle cx="1510.5" cy="364.8" r="1.9"/><circle cx="1595.8" cy="364.8" r="1.9"/><circle cx="1681.1" cy="364.8" r="1.9"/><circle cx="1766.5" cy="364.8" r="1.9"/><circle cx="17.0" cy="407.4" r="1.9"/><circle cx="102.3" cy="407.4" r="1.9"/><circle cx="187.7" cy="407.4" r="1.9"/><circle cx="273.0" cy="407.4" r="1.9"/><circle cx="358.4" cy="407.4" r="1.9"/><circle cx="443.7" cy="407.4" r="1.9"/><circle cx="529.0" cy="407.4" r="1.9"/><circle cx="614.4" cy="407.4" r="1.9"/><circle cx="699.7" cy="407.4" r="1.9"/><circle cx="785.1" cy="407.4" r="1.9"/><circle cx="870.4" cy="407.4" r="1.9"/><circle cx="955.7" cy="407.4" r="1.9"/><circle cx="1041.1" cy="407.4" r="1.9"/><circle cx="1126.4" cy="407.4" r="1.9"/><circle cx="1211.8" cy="407.4" r="1.9"/><circle cx="1297.1" cy="407.4" r="1.9"/><circle cx="1382.4" cy="407.4" r="1.9"/><circle cx="1467.8" cy="407.4" r="1.9"/><circle cx="1553.1" cy="407.4" r="1.9"/><circle cx="1638.5" cy="407.4" r="1.9"/><circle cx="1723.8" cy="407.4" r="1.9"/><circle cx="59.7" cy="450.1" r="1.9"/><circle cx="145.0" cy="450.1" r="1.9"/><circle cx="230.4" cy="450.1" r="1.9"/><circle cx="315.7" cy="450.1" r="1.9"/><circle cx="401.0" cy="450.1" r="1.9"/><circle cx="486.4" cy="450.1" r="1.9"/><circle cx="571.7" cy="450.1" r="1.9"/><circle cx="657.1" cy="450.1" r="1.9"/><circle cx="742.4" cy="450.1" r="1.9"/><circle cx="827.7" cy="450.1" r="1.9"/><circle cx="913.1" cy="450.1" r="1.9"/><circle cx="998.4" cy="450.1" r="1.9"/><circle cx="1083.8" cy="450.1" r="1.9"/><circle cx="1169.1" cy="450.1" r="1.9"/><circle cx="1254.4" cy="450.1" r="1.9"/><circle cx="1339.8" cy="450.1" r="1.9"/><circle cx="1425.1" cy="450.1" r="1.9"/><circle cx="1510.5" cy="450.1" r="1.9"/><circle cx="1595.8" cy="450.1" r="1.9"/><circle cx="1681.1" cy="450.1" r="1.9"/><circle cx="1766.5" cy="450.1" r="1.9"/><circle cx="17.0" cy="492.8" r="1.9"/><circle cx="102.3" cy="492.8" r="1.9"/><circle cx="187.7" cy="492.8" r="1.9"/><circle cx="273.0" cy="492.8" r="1.9"/><circle cx="358.4" cy="492.8" r="1.9"/><circle cx="443.7" cy="492.8" r="1.9"/><circle cx="529.0" cy="492.8" r="1.9"/><circle cx="614.4" cy="492.8" r="1.9"/><circle cx="699.7" cy="492.8" r="1.9"/><circle cx="785.1" cy="492.8" r="1.9"/><circle cx="870.4" cy="492.8" r="1.9"/><circle cx="955.7" cy="492.8" r="1.9"/><circle cx="1041.1" cy="492.8" r="1.9"/><circle cx="1126.4" cy="492.8" r="1.9"/><circle cx="1211.8" cy="492.8" r="1.9"/><circle cx="1297.1" cy="492.8" r="1.9"/><circle cx="1382.4" cy="492.8" r="1.9"/><circle cx="1467.8" cy="492.8" r="1.9"/><circle cx="1553.1" cy="492.8" r="1.9"/><circle cx="1638.5" cy="492.8" r="1.9"/><circle cx="1723.8" cy="492.8" r="1.9"/><circle cx="59.7" cy="535.4" r="1.9"/><circle cx="145.0" cy="535.4" r="1.9"/><circle cx="230.4" cy="535.4" r="1.9"/><circle cx="315.7" cy="535.4" r="1.9"/><circle cx="401.0" cy="535.4" r="1.9"/><circle cx="486.4" cy="535.4" r="1.9"/><circle cx="571.7" cy="535.4" r="1.9"/><circle cx="657.1" cy="535.4" r="1.9"/><circle cx="742.4" cy="535.4" r="1.9"/><circle cx="827.7" cy="535.4" r="1.9"/><circle cx="913.1" cy="535.4" r="1.9"/><circle cx="998.4" cy="535.4" r="1.9"/><circle cx="1083.8" cy="535.4" r="1.9"/><circle cx="1169.1" cy="535.4" r="1.9"/><circle cx="1254.4" cy="535.4" r="1.9"/><circle cx="1339.8" cy="535.4" r="1.9"/><circle cx="1425.1" cy="535.4" r="1.9"/><circle cx="1510.5" cy="535.4" r="1.9"/><circle cx="1595.8" cy="535.4" r="1.9"/><circle cx="1681.1" cy="535.4" r="1.9"/><circle cx="1766.5" cy="535.4" r="1.9"/><circle cx="17.0" cy="578.1" r="1.9"/><circle cx="102.3" cy="578.1" r="1.9"/><circle cx="187.7" cy="578.1" r="1.9"/><circle cx="273.0" cy="578.1" r="1.9"/><circle cx="358.4" cy="578.1" r="1.9"/><circle cx="443.7" cy="578.1" r="1.9"/><circle cx="529.0" cy="578.1" r="1.9"/><circle cx="614.4" cy="578.1" r="1.9"/><circle cx="699.7" cy="578.1" r="1.9"/><circle cx="785.1" cy="578.1" r="1.9"/><circle cx="870.4" cy="578.1" r="1.9"/><circle cx="955.7" cy="578.1" r="1.9"/><circle cx="1126.4" cy="578.1" r="1.9"/><circle cx="1211.8" cy="578.1" r="1.9"/><circle cx="1297.1" cy="578.1" r="1.9"/><circle cx="1382.4" cy="578.1" r="1.9"/><circle cx="1467.8" cy="578.1" r="1.9"/><circle cx="1553.1" cy="578.1" r="1.9"/><circle cx="1638.5" cy="578.1" r="1.9"/><circle cx="1723.8" cy="578.1" r="1.9"/><circle cx="59.7" cy="620.8" r="1.9"/><circle cx="145.0" cy="620.8" r="1.9"/><circle cx="230.4" cy="620.8" r="1.9"/><circle cx="315.7" cy="620.8" r="1.9"/><circle cx="401.0" cy="620.8" r="1.9"/><circle cx="486.4" cy="620.8" r="1.9"/><circle cx="571.7" cy="620.8" r="1.9"/><circle cx="657.1" cy="620.8" r="1.9"/><circle cx="742.4" cy="620.8" r="1.9"/><circle cx="827.7" cy="620.8" r="1.9"/><circle cx="913.1" cy="620.8" r="1.9"/><circle cx="998.4" cy="620.8" r="1.9"/><circle cx="1083.8" cy="620.8" r="1.9"/><circle cx="1169.1" cy="620.8" r="1.9"/><circle cx="1254.4" cy="620.8" r="1.9"/><circle cx="1339.8" cy="620.8" r="1.9"/><circle cx="1425.1" cy="620.8" r="1.9"/><circle cx="1510.5" cy="620.8" r="1.9"/><circle cx="1595.8" cy="620.8" r="1.9"/><circle cx="1681.1" cy="620.8" r="1.9"/><circle cx="1766.5" cy="620.8" r="1.9"/><circle cx="17.0" cy="663.5" r="1.9"/><circle cx="102.3" cy="663.5" r="1.9"/><circle cx="187.7" cy="663.5" r="1.9"/><circle cx="273.0" cy="663.5" r="1.9"/><circle cx="358.4" cy="663.5" r="1.9"/><circle cx="443.7" cy="663.5" r="1.9"/><circle cx="529.0" cy="663.5" r="1.9"/><circle cx="614.4" cy="663.5" r="1.9"/><circle cx="699.7" cy="663.5" r="1.9"/><circle cx="785.1" cy="663.5" r="1.9"/><circle cx="870.4" cy="663.5" r="1.9"/><circle cx="955.7" cy="663.5" r="1.9"/><circle cx="1041.1" cy="663.5" r="1.9"/><circle cx="1126.4" cy="663.5" r="1.9"/><circle cx="1211.8" cy="663.5" r="1.9"/><circle cx="1297.1" cy="663.5" r="1.9"/><circle cx="1382.4" cy="663.5" r="1.9"/><circle cx="1467.8" cy="663.5" r="1.9"/><circle cx="1553.1" cy="663.5" r="1.9"/><circle cx="1638.5" cy="663.5" r="1.9"/><circle cx="1723.8" cy="663.5" r="1.9"/><circle cx="59.7" cy="706.1" r="1.9"/><circle cx="145.0" cy="706.1" r="1.9"/><circle cx="230.4" cy="706.1" r="1.9"/><circle cx="315.7" cy="706.1" r="1.9"/><circle cx="401.0" cy="706.1" r="1.9"/><circle cx="486.4" cy="706.1" r="1.9"/><circle cx="571.7" cy="706.1" r="1.9"/><circle cx="742.4" cy="706.1" r="1.9"/><circle cx="827.7" cy="706.1" r="1.9"/><circle cx="913.1" cy="706.1" r="1.9"/><circle cx="998.4" cy="706.1" r="1.9"/><circle cx="1083.8" cy="706.1" r="1.9"/><circle cx="1681.1" cy="706.1" r="1.9"/><circle cx="1766.5" cy="706.1" r="1.9"/><circle cx="17.0" cy="748.8" r="1.9"/><circle cx="102.3" cy="748.8" r="1.9"/><circle cx="187.7" cy="748.8" r="1.9"/><circle cx="273.0" cy="748.8" r="1.9"/><circle cx="358.4" cy="748.8" r="1.9"/><circle cx="443.7" cy="748.8" r="1.9"/><circle cx="529.0" cy="748.8" r="1.9"/><circle cx="785.1" cy="748.8" r="1.9"/><circle cx="870.4" cy="748.8" r="1.9"/><circle cx="955.7" cy="748.8" r="1.9"/><circle cx="1041.1" cy="748.8" r="1.9"/><circle cx="1723.8" cy="748.8" r="1.9"/><circle cx="59.7" cy="791.5" r="1.9"/><circle cx="145.0" cy="791.5" r="1.9"/><circle cx="230.4" cy="791.5" r="1.9"/><circle cx="315.7" cy="791.5" r="1.9"/><circle cx="401.0" cy="791.5" r="1.9"/><circle cx="486.4" cy="791.5" r="1.9"/><circle cx="827.7" cy="791.5" r="1.9"/><circle cx="913.1" cy="791.5" r="1.9"/><circle cx="998.4" cy="791.5" r="1.9"/><circle cx="1083.8" cy="791.5" r="1.9"/><circle cx="1681.1" cy="791.5" r="1.9"/><circle cx="1766.5" cy="791.5" r="1.9"/><circle cx="17.0" cy="834.1" r="1.9"/><circle cx="102.3" cy="834.1" r="1.9"/><circle cx="187.7" cy="834.1" r="1.9"/><circle cx="273.0" cy="834.1" r="1.9"/><circle cx="358.4" cy="834.1" r="1.9"/><circle cx="443.7" cy="834.1" r="1.9"/><circle cx="870.4" cy="834.1" r="1.9"/><circle cx="955.7" cy="834.1" r="1.9"/><circle cx="1041.1" cy="834.1" r="1.9"/><circle cx="1723.8" cy="834.1" r="1.9"/><circle cx="59.7" cy="876.8" r="1.9"/><circle cx="145.0" cy="876.8" r="1.9"/><circle cx="230.4" cy="876.8" r="1.9"/><circle cx="315.7" cy="876.8" r="1.9"/><circle cx="401.0" cy="876.8" r="1.9"/><circle cx="486.4" cy="876.8" r="1.9"/><circle cx="827.7" cy="876.8" r="1.9"/><circle cx="913.1" cy="876.8" r="1.9"/><circle cx="998.4" cy="876.8" r="1.9"/><circle cx="1083.8" cy="876.8" r="1.9"/><circle cx="1681.1" cy="876.8" r="1.9"/><circle cx="1766.5" cy="876.8" r="1.9"/><circle cx="17.0" cy="919.5" r="1.9"/><circle cx="102.3" cy="919.5" r="1.9"/><circle cx="187.7" cy="919.5" r="1.9"/><circle cx="273.0" cy="919.5" r="1.9"/><circle cx="358.4" cy="919.5" r="1.9"/><circle cx="443.7" cy="919.5" r="1.9"/><circle cx="529.0" cy="919.5" r="1.9"/><circle cx="785.1" cy="919.5" r="1.9"/><circle cx="870.4" cy="919.5" r="1.9"/><circle cx="955.7" cy="919.5" r="1.9"/><circle cx="1041.1" cy="919.5" r="1.9"/><circle cx="1723.8" cy="919.5" r="1.9"/><circle cx="59.7" cy="962.1" r="1.9"/><circle cx="145.0" cy="962.1" r="1.9"/><circle cx="230.4" cy="962.1" r="1.9"/><circle cx="315.7" cy="962.1" r="1.9"/><circle cx="401.0" cy="962.1" r="1.9"/><circle cx="486.4" cy="962.1" r="1.9"/><circle cx="571.7" cy="962.1" r="1.9"/><circle cx="742.4" cy="962.1" r="1.9"/><circle cx="827.7" cy="962.1" r="1.9"/><circle cx="913.1" cy="962.1" r="1.9"/><circle cx="998.4" cy="962.1" r="1.9"/><circle cx="1083.8" cy="962.1" r="1.9"/><circle cx="1681.1" cy="962.1" r="1.9"/><circle cx="1766.5" cy="962.1" r="1.9"/><circle cx="17.0" cy="1004.8" r="1.9"/><circle cx="102.3" cy="1004.8" r="1.9"/><circle cx="187.7" cy="1004.8" r="1.9"/><circle cx="273.0" cy="1004.8" r="1.9"/><circle cx="358.4" cy="1004.8" r="1.9"/><circle cx="443.7" cy="1004.8" r="1.9"/><circle cx="529.0" cy="1004.8" r="1.9"/><circle cx="614.4" cy="1004.8" r="1.9"/><circle cx="699.7" cy="1004.8" r="1.9"/><circle cx="785.1" cy="1004.8" r="1.9"/><circle cx="870.4" cy="1004.8" r="1.9"/><circle cx="955.7" cy="1004.8" r="1.9"/><circle cx="1041.1" cy="1004.8" r="1.9"/><circle cx="1723.8" cy="1004.8" r="1.9"/></g>
<g clip-path="url(#bluec)"><polyline points="140,190 150,181" fill="none" stroke="#1638bd" stroke-width="3.4" stroke-linejoin="round" opacity="0.8"/><polyline points="188,194 230,181" fill="none" stroke="#1638bd" stroke-width="3.4" stroke-linejoin="round" opacity="0.8"/><polyline points="155,196 175,196 190,210 230,250 262,250" fill="none" stroke="#1638bd" stroke-width="3.4" stroke-linejoin="round" opacity="0.8"/><polyline points="230,194 262,226 300,226 312,238" fill="none" stroke="#1638bd" stroke-width="3.4" stroke-linejoin="round" opacity="0.8"/><polyline points="273.6,195 300,222 320,222 345,247 420,247 440,230 500,230 524,213.3" fill="none" stroke="#1638bd" stroke-width="3.4" stroke-linejoin="round" opacity="0.8"/><polyline points="312,194 330,194 352,216 372,238 420,238" fill="none" stroke="#1638bd" stroke-width="3.4" stroke-linejoin="round" opacity="0.8"/><polyline points="140.2,235.4 152,225 190,225 236,272 262,272" fill="none" stroke="#1638bd" stroke-width="3.4" stroke-linejoin="round" opacity="0.8"/><polyline points="209.4,237.5 222,250 232,262 300,262 316,279" fill="none" stroke="#1638bd" stroke-width="3.4" stroke-linejoin="round" opacity="0.8"/><polyline points="130,270 142,262 200,262 236,298 262,298 272,306" fill="none" stroke="#1638bd" stroke-width="3.4" stroke-linejoin="round" opacity="0.8"/><polyline points="444.5,237.5 462,255 500,255 521,236" fill="none" stroke="#1638bd" stroke-width="3.4" stroke-linejoin="round" opacity="0.8"/><polyline points="401.6,237.5 415,237.5" fill="none" stroke="#1638bd" stroke-width="3.4" stroke-linejoin="round" opacity="0.8"/><polyline points="448,205 462,220 500,220" fill="none" stroke="#1638bd" stroke-width="3.4" stroke-linejoin="round" opacity="0.8"/><polyline points="444.5,279.7 460,295 500,295" fill="none" stroke="#1638bd" stroke-width="3.4" stroke-linejoin="round" opacity="0.8"/><polyline points="190,318 205,332 262,332 277.8,320" fill="none" stroke="#1638bd" stroke-width="3.4" stroke-linejoin="round" opacity="0.8"/><polyline points="190,343 215,368 262,368 277.8,352" fill="none" stroke="#1638bd" stroke-width="3.4" stroke-linejoin="round" opacity="0.8"/><polyline points="448,307 462,322 521,322" fill="none" stroke="#1638bd" stroke-width="3.4" stroke-linejoin="round" opacity="0.8"/><polyline points="482,307 500,307 528,307" fill="none" stroke="#1638bd" stroke-width="3.4" stroke-linejoin="round" opacity="0.8"/><circle cx="312" cy="205" r="7.6" fill="none" stroke="#1638bd" stroke-width="3" opacity="0.8"/><circle cx="448" cy="205" r="7.6" fill="none" stroke="#1638bd" stroke-width="3" opacity="0.8"/><circle cx="482" cy="205" r="7.6" fill="none" stroke="#1638bd" stroke-width="3" opacity="0.8"/><circle cx="277.8" cy="239" r="7.6" fill="none" stroke="#1638bd" stroke-width="3" opacity="0.8"/><circle cx="482" cy="239" r="7.6" fill="none" stroke="#1638bd" stroke-width="3" opacity="0.8"/><circle cx="448" cy="307" r="7.6" fill="none" stroke="#1638bd" stroke-width="3" opacity="0.8"/><circle cx="482" cy="307" r="7.6" fill="none" stroke="#1638bd" stroke-width="3" opacity="0.8"/><circle cx="244" cy="307" r="7.6" fill="none" stroke="#1638bd" stroke-width="3" opacity="0.8"/><circle cx="312" cy="307" r="7.6" fill="none" stroke="#1638bd" stroke-width="3" opacity="0.8"/><circle cx="312" cy="444" r="7.6" fill="none" stroke="#1638bd" stroke-width="3" opacity="0.8"/><circle cx="277.8" cy="478" r="7.6" fill="none" stroke="#1638bd" stroke-width="3" opacity="0.8"/><circle cx="516" cy="279" r="7.6" fill="none" stroke="#1638bd" stroke-width="3" opacity="0.8"/><circle cx="312" cy="341" r="7.6" fill="none" stroke="#1638bd" stroke-width="3" opacity="0.8"/><rect x="100" y="199" width="18" height="17" fill="#1638bd" opacity="0.55"/><rect x="158" y="199" width="18" height="17" fill="#1638bd" opacity="0.55"/><rect x="100" y="235" width="18" height="17" fill="#1638bd" opacity="0.55"/><rect x="158" y="235" width="18" height="17" fill="#1638bd" opacity="0.55"/><rect x="100" y="271" width="18" height="17" fill="#1638bd" opacity="0.55"/><rect x="158" y="271" width="18" height="17" fill="#1638bd" opacity="0.55"/><rect x="148" y="306" width="18" height="17" fill="#1638bd" opacity="0.55"/><rect x="170" y="306" width="18" height="17" fill="#1638bd" opacity="0.55"/><rect x="148" y="332" width="18" height="17" fill="#1638bd" opacity="0.55"/><rect x="170" y="332" width="18" height="17" fill="#1638bd" opacity="0.55"/><polyline points="128.5,311 128.5,381 139,392 209.8,392 228,410 244,410" fill="none" stroke="#0a3cff" stroke-width="8.4" stroke-linejoin="round" stroke-linecap="round"/><ellipse cx="244" cy="411" rx="3.6" ry="5.4" fill="#0a3cff"/><ellipse cx="312" cy="411" rx="3.6" ry="5.4" fill="#0a3cff"/><ellipse cx="244" cy="479.5" rx="3.6" ry="5.4" fill="#0a3cff"/><ellipse cx="244" cy="548" rx="3.6" ry="5.4" fill="#0a3cff"/><ellipse cx="312" cy="548" rx="3.6" ry="5.4" fill="#0a3cff"/><ellipse cx="244" cy="614.4" rx="3.6" ry="5.4" fill="#0a3cff"/><ellipse cx="448.5" cy="411" rx="3.6" ry="5.4" fill="#0a3cff"/><ellipse cx="516.6" cy="411" rx="3.6" ry="5.4" fill="#0a3cff"/><ellipse cx="516.6" cy="479.5" rx="3.6" ry="5.4" fill="#0a3cff"/><ellipse cx="448.5" cy="548" rx="3.6" ry="5.4" fill="#0a3cff"/><ellipse cx="516.6" cy="548" rx="3.6" ry="5.4" fill="#0a3cff"/><ellipse cx="515.5" cy="614" rx="3.6" ry="5.4" fill="#0a3cff"/><ellipse cx="244" cy="239.5" rx="3.6" ry="5.4" fill="#0a3cff"/><ellipse cx="244" cy="342.5" rx="3.6" ry="5.4" fill="#0a3cff"/><ellipse cx="448.5" cy="342.5" rx="3.6" ry="5.4" fill="#0a3cff"/></g>
<defs><linearGradient id="gR2" gradientUnits="userSpaceOnUse" x1="1376" y1="0" x2="1440" y2="0"><stop offset="0" stop-color="#dbdbdb"/><stop offset="0.2" stop-color="#b2b2b2"/><stop offset="0.4" stop-color="#858585"/><stop offset="0.6" stop-color="#4c4c4c"/><stop offset="1" stop-color="#1f1f1f"/></linearGradient><linearGradient id="gM" gradientUnits="userSpaceOnUse" x1="800" y1="640" x2="932.9" y2="825.9"><stop offset="0" stop-color="#d6d6d6"/><stop offset="0.09" stop-color="#bdbdbd"/><stop offset="0.236" stop-color="#a6a6a6"/><stop offset="0.318" stop-color="#8c8c8c"/><stop offset="0.473" stop-color="#6e6e6e"/><stop offset="0.59" stop-color="#4c4c4c"/><stop offset="0.71" stop-color="#404040"/><stop offset="0.82" stop-color="#333333"/><stop offset="0.88" stop-color="#212121"/><stop offset="0.94" stop-color="#121212"/><stop offset="1" stop-color="#0d0d0d"/></linearGradient></defs><g clip-path="url(#redc)"><g filter="url(#cm)"><polygon points="2,657.5 497.6,657.5 539.4,615.2 762.5,615.2 936.8,440.9 936.8,180 1080.2,180 1080.2,443.7 1123.8,486.8 1438.7,486.8 1447,496.4 1447,583.4 1100,583.4 1083.5,564.8 977,564.8 965.4,576.5 964.6,721 1076,833 1080,845 1080,994 1074,1004 945.7,1004 945.7,878.5 829.6,761.6 2,761.6" fill="#fff"/><g filter="url(#b8)"><polygon points="818,610 835,600 870,592 920,592 940,600 995,588 995,705 1115,830 1115,1025 915,1025 915,890 805,780 745,780 745,690 790,688 806,660" fill="url(#gM)"/><ellipse cx="962" cy="690" rx="10" ry="22" fill="#666666"/></g><g filter="url(#b5)"><polygon points="540,616 608,616 600,626 565,634 535,650 522,640" fill="#b2b2b2"/><polygon points="498,748 530,738 572,728 580,745 562,762 498,762" fill="#d1d1d1"/><ellipse cx="848" cy="556" rx="22" ry="16" fill="#c7c7c7" transform="rotate(-40 848 556)"/><ellipse cx="806" cy="600" rx="22" ry="13" fill="#c7c7c7" transform="rotate(-45 806 600)"/><polygon points="800,612 826,600 826,640 812,668 800,690 786,690 800,660" fill="#d4d4d4"/><ellipse cx="893" cy="622" rx="34" ry="13" fill="#f7f7f7"/><ellipse cx="930" cy="612" rx="14" ry="9" fill="#cccccc"/><ellipse cx="952" cy="612" rx="16" ry="13" fill="#adadad"/></g><g filter="url(#b3)"><ellipse cx="544.0" cy="703.5" rx="8" ry="6.8" fill="#bdbdbd" transform="rotate(-10 544.0 703.5)"/><ellipse cx="75.9" cy="660.5" rx="9" ry="4.5" fill="#c7c7c7" transform="rotate(-12 75.9 660.5)"/><ellipse cx="109.9" cy="660.5" rx="9" ry="4.5" fill="#c7c7c7" transform="rotate(12 109.9 660.5)"/><ellipse cx="298.7" cy="660.5" rx="9" ry="4.5" fill="#c7c7c7" transform="rotate(-12 298.7 660.5)"/><ellipse cx="332.7" cy="660.5" rx="9" ry="4.5" fill="#c7c7c7" transform="rotate(12 332.7 660.5)"/><ellipse cx="384.0" cy="660.5" rx="9" ry="4.5" fill="#c7c7c7" transform="rotate(-12 384.0 660.5)"/><ellipse cx="418.0" cy="660.5" rx="9" ry="4.5" fill="#c7c7c7" transform="rotate(12 418.0 660.5)"/><ellipse cx="469.4" cy="660.5" rx="9" ry="4.5" fill="#c7c7c7" transform="rotate(-12 469.4 660.5)"/><ellipse cx="503.4" cy="660.5" rx="9" ry="4.5" fill="#c7c7c7" transform="rotate(12 503.4 660.5)"/><ellipse cx="77.2" cy="750.0" rx="7" ry="5.95" fill="#bdbdbd" transform="rotate(-180 77.2 750.0)"/><ellipse cx="106.8" cy="750.0" rx="7" ry="5.95" fill="#bdbdbd"/><ellipse cx="225.3" cy="750.0" rx="10" ry="8.5" fill="#bdbdbd" transform="rotate(-180 225.3 750.0)"/><ellipse cx="257.3" cy="750.0" rx="10" ry="8.5" fill="#bdbdbd"/><ellipse cx="300.9" cy="750.0" rx="7" ry="5.95" fill="#bdbdbd" transform="rotate(-180 300.9 750.0)"/><ellipse cx="330.5" cy="750.0" rx="7" ry="5.95" fill="#bdbdbd"/><ellipse cx="386.2" cy="750.0" rx="7" ry="5.95" fill="#bdbdbd" transform="rotate(-180 386.2 750.0)"/><ellipse cx="415.8" cy="750.0" rx="7" ry="5.95" fill="#bdbdbd"/><ellipse cx="467.8" cy="750.0" rx="8" ry="6.8" fill="#bdbdbd" transform="rotate(-180 467.8 750.0)"/><ellipse cx="498.2" cy="750.0" rx="8" ry="6.8" fill="#bdbdbd"/><ellipse cx="543" cy="619" rx="5" ry="4" fill="#595959"/><ellipse cx="601" cy="618" rx="6" ry="4" fill="#595959"/><polygon points="528,648 545,640 552,660 556,690 550,690 543,664" fill="#d6d6d6"/><ellipse cx="601.1" cy="613.1" rx="6" ry="5.1" fill="#bdbdbd" transform="rotate(-150 601.1 613.1)"/><ellipse cx="627.7" cy="613.1" rx="6" ry="5.1" fill="#bdbdbd" transform="rotate(-30 627.7 613.1)"/><ellipse cx="686.4" cy="613.1" rx="6" ry="5.1" fill="#bdbdbd" transform="rotate(-150 686.4 613.1)"/><ellipse cx="713.0" cy="613.1" rx="6" ry="5.1" fill="#bdbdbd" transform="rotate(-30 713.0 613.1)"/><ellipse cx="556.1" cy="663.5" rx="9" ry="7.6499999999999995" fill="#bdbdbd" transform="rotate(-180 556.1 663.5)"/><ellipse cx="586.1" cy="663.5" rx="6" ry="5.1" fill="#bdbdbd"/><ellipse cx="758.0" cy="663.5" rx="9" ry="7.6499999999999995" fill="#bdbdbd"/><ellipse cx="600.9" cy="711.0" rx="6" ry="5.1" fill="#bdbdbd" transform="rotate(-200 600.9 711.0)"/><polygon points="712,708 722,696 738,694 726,712 714,722" fill="#b2b2b2"/><polygon points="722,728 736,736 734,742 724,738" fill="#b8b8b8"/><ellipse cx="506" cy="756" rx="7" ry="6" fill="#adadad"/><ellipse cx="556" cy="752" rx="12" ry="7" fill="#a8a8a8" transform="rotate(-30 556 752)"/><ellipse cx="945.8" cy="545.3" rx="5" ry="4.25" fill="#bdbdbd" transform="rotate(-225 945.8 545.3)"/><ellipse cx="1112.0" cy="535.4" rx="6" ry="5.1" fill="#bdbdbd" transform="rotate(-180 1112.0 535.4)"/><ellipse cx="966.4" cy="569.1" rx="5" ry="4.25" fill="#bdbdbd" transform="rotate(-40 966.4 569.1)"/><ellipse cx="891" cy="515" rx="17" ry="8" fill="#cccccc" transform="rotate(-38 891 515)"/><ellipse cx="883" cy="521" rx="8" ry="6" fill="#adadad" transform="rotate(-38 883 521)"/><ellipse cx="848" cy="556" rx="16" ry="10" fill="#a8a8a8" transform="rotate(-40 848 556)"/><ellipse cx="806" cy="600" rx="16" ry="8" fill="#a8a8a8" transform="rotate(-45 806 600)"/><polygon points="990,501 1004,501 1006,505 1022,508.5 1027,504 1040,505 1044.5,511 1042,523 1050,527 1057,533.5 1070,536.5 1074.5,545 1073,568 980,568 978,550 976,535.5 966,532 961,525 957.5,519.5 962,512 975,507" fill="#b5b5b5"/><polygon points="993,506 1001,506 1005,515 1024,521 1033,528 1031,540 1036,551 1046,548 1055,543 1060,568 990,568 992,540" fill="#969696"/><ellipse cx="1012" cy="564" rx="20" ry="17" fill="#707070"/><ellipse cx="1012" cy="565" rx="13" ry="12" fill="#474747"/><ellipse cx="1153.1" cy="489.6" rx="8" ry="4" fill="#c7c7c7" transform="rotate(-10 1153.1 489.6)"/><ellipse cx="1185.1" cy="489.6" rx="8" ry="4" fill="#c7c7c7" transform="rotate(10 1185.1 489.6)"/><ellipse cx="1238.4" cy="489.6" rx="8" ry="4" fill="#c7c7c7" transform="rotate(-10 1238.4 489.6)"/><ellipse cx="1270.4" cy="489.6" rx="8" ry="4" fill="#c7c7c7" transform="rotate(10 1270.4 489.6)"/><ellipse cx="1153.1" cy="580.6" rx="8" ry="4" fill="#c7c7c7" transform="rotate(10 1153.1 580.6)"/><ellipse cx="1185.1" cy="580.6" rx="8" ry="4" fill="#c7c7c7" transform="rotate(-10 1185.1 580.6)"/><ellipse cx="1238.4" cy="580.6" rx="8" ry="4" fill="#c7c7c7" transform="rotate(10 1238.4 580.6)"/><ellipse cx="1270.4" cy="580.6" rx="8" ry="4" fill="#c7c7c7" transform="rotate(-10 1270.4 580.6)"/><ellipse cx="1323.8" cy="580.6" rx="8" ry="4" fill="#c7c7c7" transform="rotate(10 1323.8 580.6)"/><ellipse cx="1355.8" cy="580.6" rx="8" ry="4" fill="#c7c7c7" transform="rotate(-10 1355.8 580.6)"/><ellipse cx="1409.1" cy="580.6" rx="8" ry="4" fill="#c7c7c7" transform="rotate(10 1409.1 580.6)"/><ellipse cx="1441.1" cy="580.6" rx="8" ry="4" fill="#c7c7c7" transform="rotate(-10 1441.1 580.6)"/><ellipse cx="1106" cy="578" rx="9" ry="6" fill="#b8b8b8"/><polygon points="1352,588 1395,543 1402.5,543 1371.5,588" fill="#d6d6d6"/><polygon points="1371,588 1402,543 1408.5,543 1381.5,588" fill="#b2b2b2"/><polygon points="1381,588 1408,543 1416.5,543 1395.5,588" fill="#8c8c8c"/><polygon points="1395,588 1416,543 1421.5,543 1405.5,588" fill="#737373"/><polygon points="1405,588 1421,543 1428.5,543 1418.5,588" fill="#545454"/><polygon points="1418,588 1428,543 1436.5,543 1432.5,588" fill="#333333"/><polygon points="1432,588 1436,543 1452.5,543 1452.5,588" fill="#141414"/><polygon points="1376,484 1452,484 1452,499 1376,499" fill="url(#gR2)"/><ellipse cx="884" cy="600" rx="15" ry="7" fill="#b2b2b2" transform="rotate(-8 884 600)"/><ellipse cx="905" cy="598" rx="9" ry="5" fill="#bdbdbd"/><polygon points="754,692 776,692 776,742 754,742" fill="#b8b8b8"/><polygon points="796,700 816,700 814,744 797,744" fill="#9e9e9e"/><polygon points="752,746 830,746 830,764 752,764" fill="#383838"/><ellipse cx="794.4" cy="609.8" rx="6" ry="5.1" fill="#bdbdbd" transform="rotate(-50 794.4 609.8)"/></g><g filter="url(#b2)"><ellipse cx="71.7" cy="706.1" rx="3.3" ry="2.9699999999999998" fill="#545454"/><ellipse cx="47.7" cy="706.1" rx="3.3" ry="2.9699999999999998" fill="#545454" transform="rotate(-180 47.7 706.1)"/><ellipse cx="285.0" cy="706.1" rx="3.3" ry="2.9699999999999998" fill="#545454"/><ellipse cx="261.0" cy="706.1" rx="3.3" ry="2.9699999999999998" fill="#545454" transform="rotate(-180 261.0 706.1)"/><ellipse cx="370.4" cy="706.1" rx="3.3" ry="2.9699999999999998" fill="#545454"/><ellipse cx="346.4" cy="706.1" rx="3.3" ry="2.9699999999999998" fill="#545454" transform="rotate(-180 346.4 706.1)"/><ellipse cx="455.7" cy="706.1" rx="3.3" ry="2.9699999999999998" fill="#545454"/><ellipse cx="431.7" cy="706.1" rx="3.3" ry="2.9699999999999998" fill="#545454" transform="rotate(-180 431.7 706.1)"/><ellipse cx="517.0" cy="706.1" rx="3.3" ry="2.9699999999999998" fill="#545454" transform="rotate(-180 517.0 706.1)"/><ellipse cx="540.8" cy="704.0" rx="3.3" ry="2.9699999999999998" fill="#545454" transform="rotate(-10 540.8 704.0)"/><ellipse cx="77.9" cy="660" rx="5.5" ry="2.8" fill="#5c5c5c" transform="rotate(-15 77.9 660)"/><ellipse cx="107.9" cy="660" rx="5.5" ry="2.8" fill="#5c5c5c" transform="rotate(15 107.9 660)"/><ellipse cx="300.7" cy="660" rx="5.5" ry="2.8" fill="#5c5c5c" transform="rotate(-15 300.7 660)"/><ellipse cx="330.7" cy="660" rx="5.5" ry="2.8" fill="#5c5c5c" transform="rotate(15 330.7 660)"/><ellipse cx="386.0" cy="660" rx="5.5" ry="2.8" fill="#5c5c5c" transform="rotate(-15 386.0 660)"/><ellipse cx="416.0" cy="660" rx="5.5" ry="2.8" fill="#5c5c5c" transform="rotate(15 416.0 660)"/><ellipse cx="471.4" cy="660" rx="5.5" ry="2.8" fill="#5c5c5c" transform="rotate(-15 471.4 660)"/><ellipse cx="501.4" cy="660" rx="5.5" ry="2.8" fill="#5c5c5c" transform="rotate(15 501.4 660)"/><ellipse cx="80.0" cy="750.0" rx="3.3" ry="2.9699999999999998" fill="#545454" transform="rotate(-180 80.0 750.0)"/><ellipse cx="104.0" cy="750.0" rx="3.3" ry="2.9699999999999998" fill="#545454"/><ellipse cx="229.3" cy="750.0" rx="3.3" ry="2.9699999999999998" fill="#545454" transform="rotate(-180 229.3 750.0)"/><ellipse cx="253.3" cy="750.0" rx="3.3" ry="2.9699999999999998" fill="#545454"/><ellipse cx="303.7" cy="750.0" rx="3.3" ry="2.9699999999999998" fill="#545454" transform="rotate(-180 303.7 750.0)"/><ellipse cx="327.7" cy="750.0" rx="3.3" ry="2.9699999999999998" fill="#545454"/><ellipse cx="389.0" cy="750.0" rx="3.3" ry="2.9699999999999998" fill="#545454" transform="rotate(-180 389.0 750.0)"/><ellipse cx="413.0" cy="750.0" rx="3.3" ry="2.9699999999999998" fill="#545454"/><ellipse cx="471.0" cy="750.0" rx="3.3" ry="2.9699999999999998" fill="#545454" transform="rotate(-180 471.0 750.0)"/><ellipse cx="495.0" cy="750.0" rx="3.3" ry="2.9699999999999998" fill="#545454"/><ellipse cx="603.1" cy="614.3" rx="4.5" ry="4.05" fill="#545454" transform="rotate(-150 603.1 614.3)"/><ellipse cx="625.7" cy="614.3" rx="4.5" ry="4.05" fill="#545454" transform="rotate(-30 625.7 614.3)"/><ellipse cx="688.4" cy="614.3" rx="4.5" ry="4.05" fill="#545454" transform="rotate(-150 688.4 614.3)"/><ellipse cx="711.0" cy="614.3" rx="4.5" ry="4.05" fill="#545454" transform="rotate(-30 711.0 614.3)"/><ellipse cx="559.7" cy="663.5" rx="3.3" ry="2.9699999999999998" fill="#545454" transform="rotate(-180 559.7 663.5)"/><ellipse cx="583.7" cy="663.5" rx="3.3" ry="2.9699999999999998" fill="#545454"/><ellipse cx="669.1" cy="663.5" rx="3.3" ry="2.9699999999999998" fill="#545454"/><ellipse cx="645.1" cy="663.5" rx="3.3" ry="2.9699999999999998" fill="#545454" transform="rotate(-180 645.1 663.5)"/><ellipse cx="730.4" cy="663.5" rx="3.3" ry="2.9699999999999998" fill="#545454" transform="rotate(-180 730.4 663.5)"/><ellipse cx="754.4" cy="663.5" rx="3.3" ry="2.9699999999999998" fill="#545454"/><ellipse cx="626.4" cy="706.1" rx="3.3" ry="2.9699999999999998" fill="#545454"/><ellipse cx="602.4" cy="706.1" rx="3.3" ry="2.9699999999999998" fill="#545454" transform="rotate(-180 602.4 706.1)"/><ellipse cx="603.1" cy="710.2" rx="3.3" ry="2.9699999999999998" fill="#545454" transform="rotate(-200 603.1 710.2)"/><ellipse cx="687.7" cy="706.1" rx="3.3" ry="2.9699999999999998" fill="#545454" transform="rotate(-180 687.7 706.1)"/><ellipse cx="562" cy="759" rx="4" ry="3" fill="#737373"/><ellipse cx="1041.1" cy="182.5" rx="2.5" ry="2.25" fill="#6b6b6b" transform="rotate(-90 1041.1 182.5)"/><ellipse cx="1041.1" cy="205.7" rx="2.5" ry="2.25" fill="#6b6b6b" transform="rotate(-270 1041.1 205.7)"/><ellipse cx="998.4" cy="225.2" rx="2.5" ry="2.25" fill="#6b6b6b" transform="rotate(-90 998.4 225.2)"/><ellipse cx="998.4" cy="248.4" rx="2.5" ry="2.25" fill="#6b6b6b" transform="rotate(-270 998.4 248.4)"/><ellipse cx="1041.1" cy="225.2" rx="2.5" ry="2.25" fill="#6b6b6b" transform="rotate(-90 1041.1 225.2)"/><ellipse cx="1041.1" cy="248.4" rx="2.5" ry="2.25" fill="#6b6b6b" transform="rotate(-270 1041.1 248.4)"/><ellipse cx="955.7" cy="353.2" rx="2.5" ry="2.25" fill="#6b6b6b" transform="rotate(-90 955.7 353.2)"/><ellipse cx="955.7" cy="376.4" rx="2.5" ry="2.25" fill="#6b6b6b" transform="rotate(-270 955.7 376.4)"/><ellipse cx="1041.1" cy="353.2" rx="2.5" ry="2.25" fill="#6b6b6b" transform="rotate(-90 1041.1 353.2)"/><ellipse cx="1041.1" cy="376.4" rx="2.5" ry="2.25" fill="#6b6b6b" transform="rotate(-270 1041.1 376.4)"/><ellipse cx="998.4" cy="395.8" rx="2.5" ry="2.25" fill="#6b6b6b" transform="rotate(-90 998.4 395.8)"/><ellipse cx="998.4" cy="419.0" rx="2.5" ry="2.25" fill="#6b6b6b" transform="rotate(-270 998.4 419.0)"/><ellipse cx="958.8" cy="438.7" rx="2.8" ry="2.52" fill="#6b6b6b" transform="rotate(-75 958.8 438.7)"/><ellipse cx="952.6" cy="461.5" rx="2.8" ry="2.52" fill="#6b6b6b" transform="rotate(-255 952.6 461.5)"/><ellipse cx="1039.1" cy="438.5" rx="2.8" ry="2.52" fill="#6b6b6b" transform="rotate(-100 1039.1 438.5)"/><ellipse cx="1043.1" cy="461.7" rx="2.8" ry="2.52" fill="#6b6b6b" transform="rotate(-280 1043.1 461.7)"/><ellipse cx="1081.9" cy="226.0" rx="2.5" ry="2.25" fill="#545454" transform="rotate(-100 1081.9 226.0)"/><ellipse cx="1081.9" cy="247.6" rx="2.5" ry="2.25" fill="#545454" transform="rotate(-260 1081.9 247.6)"/><ellipse cx="1081.9" cy="311.3" rx="2.5" ry="2.25" fill="#545454" transform="rotate(-100 1081.9 311.3)"/><ellipse cx="1081.9" cy="332.9" rx="2.5" ry="2.25" fill="#545454" transform="rotate(-260 1081.9 332.9)"/><ellipse cx="1081.9" cy="396.6" rx="2.5" ry="2.25" fill="#545454" transform="rotate(-100 1081.9 396.6)"/><ellipse cx="1081.9" cy="418.2" rx="2.5" ry="2.25" fill="#545454" transform="rotate(-260 1081.9 418.2)"/><ellipse cx="921.6" cy="484.3" rx="3.3" ry="2.9699999999999998" fill="#545454" transform="rotate(-45 921.6 484.3)"/><ellipse cx="904.6" cy="501.3" rx="3.3" ry="2.9699999999999998" fill="#545454" transform="rotate(-225 904.6 501.3)"/><ellipse cx="878.9" cy="526.9" rx="3.3" ry="2.9699999999999998" fill="#545454" transform="rotate(-45 878.9 526.9)"/><ellipse cx="861.9" cy="543.9" rx="3.3" ry="2.9699999999999998" fill="#545454" transform="rotate(-225 861.9 543.9)"/><ellipse cx="836.2" cy="569.6" rx="3.3" ry="2.9699999999999998" fill="#545454" transform="rotate(-45 836.2 569.6)"/><ellipse cx="819.2" cy="586.6" rx="3.3" ry="2.9699999999999998" fill="#545454" transform="rotate(-225 819.2 586.6)"/><ellipse cx="998.4" cy="480.8" rx="3.8" ry="3.42" fill="#545454" transform="rotate(-90 998.4 480.8)"/><ellipse cx="997.4" cy="504.8" rx="3.3" ry="2.9699999999999998" fill="#545454" transform="rotate(-265 997.4 504.8)"/><ellipse cx="1075.3" cy="484.3" rx="3.3" ry="2.9699999999999998" fill="#545454" transform="rotate(-135 1075.3 484.3)"/><ellipse cx="1092.3" cy="501.3" rx="3.3" ry="2.9699999999999998" fill="#545454" transform="rotate(-315 1092.3 501.3)"/><ellipse cx="964.2" cy="526.9" rx="3.3" ry="2.9699999999999998" fill="#545454" transform="rotate(-45 964.2 526.9)"/><ellipse cx="947.2" cy="543.9" rx="3.3" ry="2.9699999999999998" fill="#545454" transform="rotate(-225 947.2 543.9)"/><ellipse cx="947.2" cy="543.9" rx="3.3" ry="2.9699999999999998" fill="#545454" transform="rotate(-225 947.2 543.9)"/><ellipse cx="1032.6" cy="526.9" rx="3.3" ry="2.9699999999999998" fill="#545454" transform="rotate(-135 1032.6 526.9)"/><ellipse cx="1049.6" cy="543.9" rx="3.3" ry="2.9699999999999998" fill="#545454" transform="rotate(-315 1049.6 543.9)"/><ellipse cx="1114.4" cy="535.4" rx="3.3" ry="2.9699999999999998" fill="#545454" transform="rotate(-180 1114.4 535.4)"/><ellipse cx="1138.4" cy="535.4" rx="3.3" ry="2.9699999999999998" fill="#545454"/><ellipse cx="919.1" cy="567.7" rx="3.3" ry="2.9699999999999998" fill="#545454" transform="rotate(-60 919.1 567.7)"/><ellipse cx="909.0" cy="589.4" rx="3.3" ry="2.9699999999999998" fill="#545454" transform="rotate(-250 909.0 589.4)"/><ellipse cx="964.9" cy="570.4" rx="3.3" ry="2.9699999999999998" fill="#545454" transform="rotate(-40 964.9 570.4)"/><ellipse cx="1012" cy="566" rx="7" ry="6.5" fill="#0d0d0d"/><ellipse cx="1038" cy="547.5" rx="5" ry="2.6" fill="#c7c7c7"/><ellipse cx="996.5" cy="506" rx="3" ry="5" fill="#4c4c4c"/><ellipse cx="1223.8" cy="535.4" rx="3.3" ry="2.9699999999999998" fill="#545454"/><ellipse cx="1199.8" cy="535.4" rx="3.3" ry="2.9699999999999998" fill="#545454" transform="rotate(-180 1199.8 535.4)"/><ellipse cx="1309.1" cy="535.4" rx="3.3" ry="2.9699999999999998" fill="#545454"/><ellipse cx="1285.1" cy="535.4" rx="3.3" ry="2.9699999999999998" fill="#545454" transform="rotate(-180 1285.1 535.4)"/><ellipse cx="1154.6" cy="489.4" rx="5" ry="2.6" fill="#5c5c5c" transform="rotate(-12 1154.6 489.4)"/><ellipse cx="1183.6" cy="489.4" rx="5" ry="2.6" fill="#5c5c5c" transform="rotate(12 1183.6 489.4)"/><ellipse cx="1239.9" cy="489.4" rx="5" ry="2.6" fill="#5c5c5c" transform="rotate(-12 1239.9 489.4)"/><ellipse cx="1268.9" cy="489.4" rx="5" ry="2.6" fill="#5c5c5c" transform="rotate(12 1268.9 489.4)"/><ellipse cx="1154.6" cy="580.8" rx="5" ry="2.6" fill="#5c5c5c" transform="rotate(12 1154.6 580.8)"/><ellipse cx="1183.6" cy="580.8" rx="5" ry="2.6" fill="#5c5c5c" transform="rotate(-12 1183.6 580.8)"/><ellipse cx="1239.9" cy="580.8" rx="5" ry="2.6" fill="#5c5c5c" transform="rotate(12 1239.9 580.8)"/><ellipse cx="1268.9" cy="580.8" rx="5" ry="2.6" fill="#5c5c5c" transform="rotate(-12 1268.9 580.8)"/><ellipse cx="1325.3" cy="580.8" rx="5" ry="2.6" fill="#5c5c5c" transform="rotate(12 1325.3 580.8)"/><ellipse cx="1354.3" cy="580.8" rx="5" ry="2.6" fill="#5c5c5c" transform="rotate(-12 1354.3 580.8)"/><ellipse cx="1410.6" cy="580.8" rx="5" ry="2.6" fill="#5c5c5c" transform="rotate(12 1410.6 580.8)"/><ellipse cx="1439.6" cy="580.8" rx="5" ry="2.6" fill="#5c5c5c" transform="rotate(-12 1439.6 580.8)"/><ellipse cx="1326" cy="490.5" rx="3.4" ry="3" fill="#666666"/><ellipse cx="1310" cy="537" rx="3.4" ry="3.4" fill="#8c8c8c"/><polygon points="781,720 789,720 789,737 781,737" fill="#f2f2f2"/><polygon points="824,720 831,720 831,737 824,737" fill="#dbdbdb"/><polygon points="738,716 747,716 747,740 738,740" fill="#f7f7f7"/><ellipse cx="773.1" cy="706.1" rx="4.5" ry="4.05" fill="#333333" transform="rotate(-180 773.1 706.1)"/><ellipse cx="797.1" cy="706.1" rx="4.5" ry="4.05" fill="#333333"/><ellipse cx="815.7" cy="706.1" rx="4.5" ry="4.05" fill="#333333" transform="rotate(-180 815.7 706.1)"/><ellipse cx="839.7" cy="706.1" rx="4.5" ry="4.05" fill="#333333"/><ellipse cx="754.4" cy="706.1" rx="4.5" ry="4.05" fill="#333333"/><ellipse cx="878.9" cy="697.6" rx="4" ry="3.6" fill="#1f1f1f" transform="rotate(-45 878.9 697.6)"/><ellipse cx="861.9" cy="714.6" rx="4" ry="3.6" fill="#1f1f1f" transform="rotate(-225 861.9 714.6)"/><ellipse cx="921.6" cy="697.6" rx="4" ry="3.6" fill="#1f1f1f" transform="rotate(-45 921.6 697.6)"/><ellipse cx="904.6" cy="714.6" rx="4" ry="3.6" fill="#1f1f1f" transform="rotate(-225 904.6 714.6)"/><ellipse cx="878.9" cy="740.3" rx="4" ry="3.6" fill="#1f1f1f" transform="rotate(-45 878.9 740.3)"/><ellipse cx="861.9" cy="757.3" rx="4" ry="3.6" fill="#1f1f1f" transform="rotate(-225 861.9 757.3)"/><ellipse cx="921.6" cy="740.3" rx="4" ry="3.6" fill="#1f1f1f" transform="rotate(-45 921.6 740.3)"/><ellipse cx="904.6" cy="757.3" rx="4" ry="3.6" fill="#1f1f1f" transform="rotate(-225 904.6 757.3)"/><ellipse cx="836.2" cy="740.3" rx="4" ry="3.6" fill="#1f1f1f" transform="rotate(-45 836.2 740.3)"/><ellipse cx="819.2" cy="757.3" rx="4" ry="3.6" fill="#1f1f1f" transform="rotate(-225 819.2 757.3)"/><ellipse cx="878.9" cy="783.0" rx="4" ry="3.6" fill="#1f1f1f" transform="rotate(-45 878.9 783.0)"/><ellipse cx="861.9" cy="800.0" rx="4" ry="3.6" fill="#1f1f1f" transform="rotate(-225 861.9 800.0)"/><ellipse cx="792.8" cy="611.6" rx="3.3" ry="2.9699999999999998" fill="#545454" transform="rotate(-50 792.8 611.6)"/><ellipse cx="775.3" cy="627.7" rx="3.3" ry="2.9699999999999998" fill="#545454" transform="rotate(-215 775.3 627.7)"/><ellipse cx="864.4" cy="610.4" rx="3.3" ry="2.9699999999999998" fill="#4c4c4c" transform="rotate(-120 864.4 610.4)"/><ellipse cx="874.5" cy="632.1" rx="3.3" ry="2.9699999999999998" fill="#4c4c4c" transform="rotate(-290 874.5 632.1)"/><ellipse cx="907.1" cy="610.4" rx="3.3" ry="2.9699999999999998" fill="#4c4c4c" transform="rotate(-120 907.1 610.4)"/><ellipse cx="919.1" cy="610.4" rx="3.3" ry="2.9699999999999998" fill="#4c4c4c" transform="rotate(-60 919.1 610.4)"/><ellipse cx="911.0" cy="632.6" rx="3.3" ry="2.9699999999999998" fill="#4c4c4c" transform="rotate(-260 911.0 632.6)"/><ellipse cx="819.2" cy="586.6" rx="3.3" ry="2.9699999999999998" fill="#545454" transform="rotate(-225 819.2 586.6)"/></g></g></g>
<g clip-path="url(#redc)" fill="#000" opacity="0.13"><circle cx="17.0" cy="151.4" r="1.9"/><circle cx="102.3" cy="151.4" r="1.9"/><circle cx="187.7" cy="151.4" r="1.9"/><circle cx="273.0" cy="151.4" r="1.9"/><circle cx="358.4" cy="151.4" r="1.9"/><circle cx="443.7" cy="151.4" r="1.9"/><circle cx="529.0" cy="151.4" r="1.9"/><circle cx="614.4" cy="151.4" r="1.9"/><circle cx="699.7" cy="151.4" r="1.9"/><circle cx="785.1" cy="151.4" r="1.9"/><circle cx="870.4" cy="151.4" r="1.9"/><circle cx="955.7" cy="151.4" r="1.9"/><circle cx="1041.1" cy="151.4" r="1.9"/><circle cx="1126.4" cy="151.4" r="1.9"/><circle cx="1211.8" cy="151.4" r="1.9"/><circle cx="1297.1" cy="151.4" r="1.9"/><circle cx="1382.4" cy="151.4" r="1.9"/><circle cx="1467.8" cy="151.4" r="1.9"/><circle cx="1553.1" cy="151.4" r="1.9"/><circle cx="1638.5" cy="151.4" r="1.9"/><circle cx="1723.8" cy="151.4" r="1.9"/><circle cx="59.7" cy="194.1" r="1.9"/><circle cx="145.0" cy="194.1" r="1.9"/><circle cx="230.4" cy="194.1" r="1.9"/><circle cx="315.7" cy="194.1" r="1.9"/><circle cx="401.0" cy="194.1" r="1.9"/><circle cx="486.4" cy="194.1" r="1.9"/><circle cx="571.7" cy="194.1" r="1.9"/><circle cx="657.1" cy="194.1" r="1.9"/><circle cx="742.4" cy="194.1" r="1.9"/><circle cx="827.7" cy="194.1" r="1.9"/><circle cx="913.1" cy="194.1" r="1.9"/><circle cx="998.4" cy="194.1" r="1.9"/><circle cx="1083.8" cy="194.1" r="1.9"/><circle cx="1169.1" cy="194.1" r="1.9"/><circle cx="1254.4" cy="194.1" r="1.9"/><circle cx="1339.8" cy="194.1" r="1.9"/><circle cx="1425.1" cy="194.1" r="1.9"/><circle cx="1510.5" cy="194.1" r="1.9"/><circle cx="1595.8" cy="194.1" r="1.9"/><circle cx="1681.1" cy="194.1" r="1.9"/><circle cx="1766.5" cy="194.1" r="1.9"/><circle cx="17.0" cy="236.8" r="1.9"/><circle cx="102.3" cy="236.8" r="1.9"/><circle cx="187.7" cy="236.8" r="1.9"/><circle cx="273.0" cy="236.8" r="1.9"/><circle cx="358.4" cy="236.8" r="1.9"/><circle cx="443.7" cy="236.8" r="1.9"/><circle cx="529.0" cy="236.8" r="1.9"/><circle cx="614.4" cy="236.8" r="1.9"/><circle cx="699.7" cy="236.8" r="1.9"/><circle cx="785.1" cy="236.8" r="1.9"/><circle cx="870.4" cy="236.8" r="1.9"/><circle cx="955.7" cy="236.8" r="1.9"/><circle cx="1041.1" cy="236.8" r="1.9"/><circle cx="1126.4" cy="236.8" r="1.9"/><circle cx="1211.8" cy="236.8" r="1.9"/><circle cx="1297.1" cy="236.8" r="1.9"/><circle cx="1382.4" cy="236.8" r="1.9"/><circle cx="1467.8" cy="236.8" r="1.9"/><circle cx="1553.1" cy="236.8" r="1.9"/><circle cx="1638.5" cy="236.8" r="1.9"/><circle cx="1723.8" cy="236.8" r="1.9"/><circle cx="59.7" cy="279.4" r="1.9"/><circle cx="145.0" cy="279.4" r="1.9"/><circle cx="230.4" cy="279.4" r="1.9"/><circle cx="315.7" cy="279.4" r="1.9"/><circle cx="401.0" cy="279.4" r="1.9"/><circle cx="486.4" cy="279.4" r="1.9"/><circle cx="571.7" cy="279.4" r="1.9"/><circle cx="657.1" cy="279.4" r="1.9"/><circle cx="742.4" cy="279.4" r="1.9"/><circle cx="827.7" cy="279.4" r="1.9"/><circle cx="913.1" cy="279.4" r="1.9"/><circle cx="998.4" cy="279.4" r="1.9"/><circle cx="1083.8" cy="279.4" r="1.9"/><circle cx="1169.1" cy="279.4" r="1.9"/><circle cx="1254.4" cy="279.4" r="1.9"/><circle cx="1339.8" cy="279.4" r="1.9"/><circle cx="1425.1" cy="279.4" r="1.9"/><circle cx="1510.5" cy="279.4" r="1.9"/><circle cx="1595.8" cy="279.4" r="1.9"/><circle cx="1681.1" cy="279.4" r="1.9"/><circle cx="1766.5" cy="279.4" r="1.9"/><circle cx="17.0" cy="322.1" r="1.9"/><circle cx="102.3" cy="322.1" r="1.9"/><circle cx="187.7" cy="322.1" r="1.9"/><circle cx="273.0" cy="322.1" r="1.9"/><circle cx="358.4" cy="322.1" r="1.9"/><circle cx="443.7" cy="322.1" r="1.9"/><circle cx="529.0" cy="322.1" r="1.9"/><circle cx="614.4" cy="322.1" r="1.9"/><circle cx="699.7" cy="322.1" r="1.9"/><circle cx="785.1" cy="322.1" r="1.9"/><circle cx="870.4" cy="322.1" r="1.9"/><circle cx="955.7" cy="322.1" r="1.9"/><circle cx="1041.1" cy="322.1" r="1.9"/><circle cx="1126.4" cy="322.1" r="1.9"/><circle cx="1211.8" cy="322.1" r="1.9"/><circle cx="1297.1" cy="322.1" r="1.9"/><circle cx="1382.4" cy="322.1" r="1.9"/><circle cx="1467.8" cy="322.1" r="1.9"/><circle cx="1553.1" cy="322.1" r="1.9"/><circle cx="1638.5" cy="322.1" r="1.9"/><circle cx="1723.8" cy="322.1" r="1.9"/><circle cx="59.7" cy="364.8" r="1.9"/><circle cx="145.0" cy="364.8" r="1.9"/><circle cx="230.4" cy="364.8" r="1.9"/><circle cx="315.7" cy="364.8" r="1.9"/><circle cx="401.0" cy="364.8" r="1.9"/><circle cx="486.4" cy="364.8" r="1.9"/><circle cx="571.7" cy="364.8" r="1.9"/><circle cx="657.1" cy="364.8" r="1.9"/><circle cx="742.4" cy="364.8" r="1.9"/><circle cx="827.7" cy="364.8" r="1.9"/><circle cx="913.1" cy="364.8" r="1.9"/><circle cx="998.4" cy="364.8" r="1.9"/><circle cx="1083.8" cy="364.8" r="1.9"/><circle cx="1169.1" cy="364.8" r="1.9"/><circle cx="1254.4" cy="364.8" r="1.9"/><circle cx="1339.8" cy="364.8" r="1.9"/><circle cx="1425.1" cy="364.8" r="1.9"/><circle cx="1510.5" cy="364.8" r="1.9"/><circle cx="1595.8" cy="364.8" r="1.9"/><circle cx="1681.1" cy="364.8" r="1.9"/><circle cx="1766.5" cy="364.8" r="1.9"/><circle cx="17.0" cy="407.4" r="1.9"/><circle cx="102.3" cy="407.4" r="1.9"/><circle cx="187.7" cy="407.4" r="1.9"/><circle cx="273.0" cy="407.4" r="1.9"/><circle cx="358.4" cy="407.4" r="1.9"/><circle cx="443.7" cy="407.4" r="1.9"/><circle cx="529.0" cy="407.4" r="1.9"/><circle cx="614.4" cy="407.4" r="1.9"/><circle cx="699.7" cy="407.4" r="1.9"/><circle cx="785.1" cy="407.4" r="1.9"/><circle cx="870.4" cy="407.4" r="1.9"/><circle cx="955.7" cy="407.4" r="1.9"/><circle cx="1041.1" cy="407.4" r="1.9"/><circle cx="1126.4" cy="407.4" r="1.9"/><circle cx="1211.8" cy="407.4" r="1.9"/><circle cx="1297.1" cy="407.4" r="1.9"/><circle cx="1382.4" cy="407.4" r="1.9"/><circle cx="1467.8" cy="407.4" r="1.9"/><circle cx="1553.1" cy="407.4" r="1.9"/><circle cx="1638.5" cy="407.4" r="1.9"/><circle cx="1723.8" cy="407.4" r="1.9"/><circle cx="59.7" cy="450.1" r="1.9"/><circle cx="145.0" cy="450.1" r="1.9"/><circle cx="230.4" cy="450.1" r="1.9"/><circle cx="315.7" cy="450.1" r="1.9"/><circle cx="401.0" cy="450.1" r="1.9"/><circle cx="486.4" cy="450.1" r="1.9"/><circle cx="571.7" cy="450.1" r="1.9"/><circle cx="657.1" cy="450.1" r="1.9"/><circle cx="742.4" cy="450.1" r="1.9"/><circle cx="827.7" cy="450.1" r="1.9"/><circle cx="913.1" cy="450.1" r="1.9"/><circle cx="998.4" cy="450.1" r="1.9"/><circle cx="1083.8" cy="450.1" r="1.9"/><circle cx="1169.1" cy="450.1" r="1.9"/><circle cx="1254.4" cy="450.1" r="1.9"/><circle cx="1339.8" cy="450.1" r="1.9"/><circle cx="1425.1" cy="450.1" r="1.9"/><circle cx="1510.5" cy="450.1" r="1.9"/><circle cx="1595.8" cy="450.1" r="1.9"/><circle cx="1681.1" cy="450.1" r="1.9"/><circle cx="1766.5" cy="450.1" r="1.9"/><circle cx="17.0" cy="492.8" r="1.9"/><circle cx="102.3" cy="492.8" r="1.9"/><circle cx="187.7" cy="492.8" r="1.9"/><circle cx="273.0" cy="492.8" r="1.9"/><circle cx="358.4" cy="492.8" r="1.9"/><circle cx="443.7" cy="492.8" r="1.9"/><circle cx="529.0" cy="492.8" r="1.9"/><circle cx="614.4" cy="492.8" r="1.9"/><circle cx="699.7" cy="492.8" r="1.9"/><circle cx="785.1" cy="492.8" r="1.9"/><circle cx="870.4" cy="492.8" r="1.9"/><circle cx="955.7" cy="492.8" r="1.9"/><circle cx="1041.1" cy="492.8" r="1.9"/><circle cx="1126.4" cy="492.8" r="1.9"/><circle cx="1211.8" cy="492.8" r="1.9"/><circle cx="1297.1" cy="492.8" r="1.9"/><circle cx="1382.4" cy="492.8" r="1.9"/><circle cx="1467.8" cy="492.8" r="1.9"/><circle cx="1553.1" cy="492.8" r="1.9"/><circle cx="1638.5" cy="492.8" r="1.9"/><circle cx="1723.8" cy="492.8" r="1.9"/><circle cx="59.7" cy="535.4" r="1.9"/><circle cx="145.0" cy="535.4" r="1.9"/><circle cx="230.4" cy="535.4" r="1.9"/><circle cx="315.7" cy="535.4" r="1.9"/><circle cx="401.0" cy="535.4" r="1.9"/><circle cx="486.4" cy="535.4" r="1.9"/><circle cx="571.7" cy="535.4" r="1.9"/><circle cx="657.1" cy="535.4" r="1.9"/><circle cx="742.4" cy="535.4" r="1.9"/><circle cx="827.7" cy="535.4" r="1.9"/><circle cx="913.1" cy="535.4" r="1.9"/><circle cx="998.4" cy="535.4" r="1.9"/><circle cx="1083.8" cy="535.4" r="1.9"/><circle cx="1169.1" cy="535.4" r="1.9"/><circle cx="1254.4" cy="535.4" r="1.9"/><circle cx="1339.8" cy="535.4" r="1.9"/><circle cx="1425.1" cy="535.4" r="1.9"/><circle cx="1510.5" cy="535.4" r="1.9"/><circle cx="1595.8" cy="535.4" r="1.9"/><circle cx="1681.1" cy="535.4" r="1.9"/><circle cx="1766.5" cy="535.4" r="1.9"/><circle cx="17.0" cy="578.1" r="1.9"/><circle cx="102.3" cy="578.1" r="1.9"/><circle cx="187.7" cy="578.1" r="1.9"/><circle cx="273.0" cy="578.1" r="1.9"/><circle cx="358.4" cy="578.1" r="1.9"/><circle cx="443.7" cy="578.1" r="1.9"/><circle cx="529.0" cy="578.1" r="1.9"/><circle cx="614.4" cy="578.1" r="1.9"/><circle cx="699.7" cy="578.1" r="1.9"/><circle cx="785.1" cy="578.1" r="1.9"/><circle cx="870.4" cy="578.1" r="1.9"/><circle cx="955.7" cy="578.1" r="1.9"/><circle cx="1126.4" cy="578.1" r="1.9"/><circle cx="1211.8" cy="578.1" r="1.9"/><circle cx="1297.1" cy="578.1" r="1.9"/><circle cx="1382.4" cy="578.1" r="1.9"/><circle cx="1467.8" cy="578.1" r="1.9"/><circle cx="1553.1" cy="578.1" r="1.9"/><circle cx="1638.5" cy="578.1" r="1.9"/><circle cx="1723.8" cy="578.1" r="1.9"/><circle cx="59.7" cy="620.8" r="1.9"/><circle cx="145.0" cy="620.8" r="1.9"/><circle cx="230.4" cy="620.8" r="1.9"/><circle cx="315.7" cy="620.8" r="1.9"/><circle cx="401.0" cy="620.8" r="1.9"/><circle cx="486.4" cy="620.8" r="1.9"/><circle cx="571.7" cy="620.8" r="1.9"/><circle cx="657.1" cy="620.8" r="1.9"/><circle cx="742.4" cy="620.8" r="1.9"/><circle cx="827.7" cy="620.8" r="1.9"/><circle cx="913.1" cy="620.8" r="1.9"/><circle cx="998.4" cy="620.8" r="1.9"/><circle cx="1083.8" cy="620.8" r="1.9"/><circle cx="1169.1" cy="620.8" r="1.9"/><circle cx="1254.4" cy="620.8" r="1.9"/><circle cx="1339.8" cy="620.8" r="1.9"/><circle cx="1425.1" cy="620.8" r="1.9"/><circle cx="1510.5" cy="620.8" r="1.9"/><circle cx="1595.8" cy="620.8" r="1.9"/><circle cx="1681.1" cy="620.8" r="1.9"/><circle cx="1766.5" cy="620.8" r="1.9"/><circle cx="17.0" cy="663.5" r="1.9"/><circle cx="102.3" cy="663.5" r="1.9"/><circle cx="187.7" cy="663.5" r="1.9"/><circle cx="273.0" cy="663.5" r="1.9"/><circle cx="358.4" cy="663.5" r="1.9"/><circle cx="443.7" cy="663.5" r="1.9"/><circle cx="529.0" cy="663.5" r="1.9"/><circle cx="614.4" cy="663.5" r="1.9"/><circle cx="699.7" cy="663.5" r="1.9"/><circle cx="785.1" cy="663.5" r="1.9"/><circle cx="870.4" cy="663.5" r="1.9"/><circle cx="955.7" cy="663.5" r="1.9"/><circle cx="1041.1" cy="663.5" r="1.9"/><circle cx="1126.4" cy="663.5" r="1.9"/><circle cx="1211.8" cy="663.5" r="1.9"/><circle cx="1297.1" cy="663.5" r="1.9"/><circle cx="1382.4" cy="663.5" r="1.9"/><circle cx="1467.8" cy="663.5" r="1.9"/><circle cx="1553.1" cy="663.5" r="1.9"/><circle cx="1638.5" cy="663.5" r="1.9"/><circle cx="1723.8" cy="663.5" r="1.9"/><circle cx="59.7" cy="706.1" r="1.9"/><circle cx="145.0" cy="706.1" r="1.9"/><circle cx="230.4" cy="706.1" r="1.9"/><circle cx="315.7" cy="706.1" r="1.9"/><circle cx="401.0" cy="706.1" r="1.9"/><circle cx="486.4" cy="706.1" r="1.9"/><circle cx="571.7" cy="706.1" r="1.9"/><circle cx="742.4" cy="706.1" r="1.9"/><circle cx="827.7" cy="706.1" r="1.9"/><circle cx="913.1" cy="706.1" r="1.9"/><circle cx="998.4" cy="706.1" r="1.9"/><circle cx="1083.8" cy="706.1" r="1.9"/><circle cx="1681.1" cy="706.1" r="1.9"/><circle cx="1766.5" cy="706.1" r="1.9"/><circle cx="17.0" cy="748.8" r="1.9"/><circle cx="102.3" cy="748.8" r="1.9"/><circle cx="187.7" cy="748.8" r="1.9"/><circle cx="273.0" cy="748.8" r="1.9"/><circle cx="358.4" cy="748.8" r="1.9"/><circle cx="443.7" cy="748.8" r="1.9"/><circle cx="529.0" cy="748.8" r="1.9"/><circle cx="785.1" cy="748.8" r="1.9"/><circle cx="870.4" cy="748.8" r="1.9"/><circle cx="955.7" cy="748.8" r="1.9"/><circle cx="1041.1" cy="748.8" r="1.9"/><circle cx="1723.8" cy="748.8" r="1.9"/><circle cx="59.7" cy="791.5" r="1.9"/><circle cx="145.0" cy="791.5" r="1.9"/><circle cx="230.4" cy="791.5" r="1.9"/><circle cx="315.7" cy="791.5" r="1.9"/><circle cx="401.0" cy="791.5" r="1.9"/><circle cx="486.4" cy="791.5" r="1.9"/><circle cx="827.7" cy="791.5" r="1.9"/><circle cx="913.1" cy="791.5" r="1.9"/><circle cx="998.4" cy="791.5" r="1.9"/><circle cx="1083.8" cy="791.5" r="1.9"/><circle cx="1681.1" cy="791.5" r="1.9"/><circle cx="1766.5" cy="791.5" r="1.9"/><circle cx="17.0" cy="834.1" r="1.9"/><circle cx="102.3" cy="834.1" r="1.9"/><circle cx="187.7" cy="834.1" r="1.9"/><circle cx="273.0" cy="834.1" r="1.9"/><circle cx="358.4" cy="834.1" r="1.9"/><circle cx="443.7" cy="834.1" r="1.9"/><circle cx="870.4" cy="834.1" r="1.9"/><circle cx="955.7" cy="834.1" r="1.9"/><circle cx="1041.1" cy="834.1" r="1.9"/><circle cx="1723.8" cy="834.1" r="1.9"/><circle cx="59.7" cy="876.8" r="1.9"/><circle cx="145.0" cy="876.8" r="1.9"/><circle cx="230.4" cy="876.8" r="1.9"/><circle cx="315.7" cy="876.8" r="1.9"/><circle cx="401.0" cy="876.8" r="1.9"/><circle cx="486.4" cy="876.8" r="1.9"/><circle cx="827.7" cy="876.8" r="1.9"/><circle cx="913.1" cy="876.8" r="1.9"/><circle cx="998.4" cy="876.8" r="1.9"/><circle cx="1083.8" cy="876.8" r="1.9"/><circle cx="1681.1" cy="876.8" r="1.9"/><circle cx="1766.5" cy="876.8" r="1.9"/><circle cx="17.0" cy="919.5" r="1.9"/><circle cx="102.3" cy="919.5" r="1.9"/><circle cx="187.7" cy="919.5" r="1.9"/><circle cx="273.0" cy="919.5" r="1.9"/><circle cx="358.4" cy="919.5" r="1.9"/><circle cx="443.7" cy="919.5" r="1.9"/><circle cx="529.0" cy="919.5" r="1.9"/><circle cx="785.1" cy="919.5" r="1.9"/><circle cx="870.4" cy="919.5" r="1.9"/><circle cx="955.7" cy="919.5" r="1.9"/><circle cx="1041.1" cy="919.5" r="1.9"/><circle cx="1723.8" cy="919.5" r="1.9"/><circle cx="59.7" cy="962.1" r="1.9"/><circle cx="145.0" cy="962.1" r="1.9"/><circle cx="230.4" cy="962.1" r="1.9"/><circle cx="315.7" cy="962.1" r="1.9"/><circle cx="401.0" cy="962.1" r="1.9"/><circle cx="486.4" cy="962.1" r="1.9"/><circle cx="571.7" cy="962.1" r="1.9"/><circle cx="742.4" cy="962.1" r="1.9"/><circle cx="827.7" cy="962.1" r="1.9"/><circle cx="913.1" cy="962.1" r="1.9"/><circle cx="998.4" cy="962.1" r="1.9"/><circle cx="1083.8" cy="962.1" r="1.9"/><circle cx="1681.1" cy="962.1" r="1.9"/><circle cx="1766.5" cy="962.1" r="1.9"/><circle cx="17.0" cy="1004.8" r="1.9"/><circle cx="102.3" cy="1004.8" r="1.9"/><circle cx="187.7" cy="1004.8" r="1.9"/><circle cx="273.0" cy="1004.8" r="1.9"/><circle cx="358.4" cy="1004.8" r="1.9"/><circle cx="443.7" cy="1004.8" r="1.9"/><circle cx="529.0" cy="1004.8" r="1.9"/><circle cx="614.4" cy="1004.8" r="1.9"/><circle cx="699.7" cy="1004.8" r="1.9"/><circle cx="785.1" cy="1004.8" r="1.9"/><circle cx="870.4" cy="1004.8" r="1.9"/><circle cx="955.7" cy="1004.8" r="1.9"/><circle cx="1041.1" cy="1004.8" r="1.9"/><circle cx="1723.8" cy="1004.8" r="1.9"/></g>
<circle cx="657.6" cy="833.8" r="115.5" fill="#4e4e4e"/>
<circle cx="657.6" cy="833.8" r="84.6" fill="url(#lav2)" stroke="#0f3f1e" stroke-width="20.8"/><rect x="1159.3" y="738.5" width="446.8" height="330" rx="50" ry="50" fill="url(#lav)" stroke="#0f3f1e" stroke-width="21"/><rect x="1756.5" y="738.5" width="446.8" height="330" rx="50" ry="50" fill="url(#lav)" stroke="#0f3f1e" stroke-width="21"/>
<g fill="#4e4e4e"><circle cx="16" cy="187.6" r="10.3"/><circle cx="52.4" cy="194.7" r="10.3"/><circle cx="16" cy="222.5" r="10.3"/><circle cx="16" cy="259" r="10.3"/><circle cx="16" cy="278" r="10.3"/><circle cx="66.4" cy="258.3" r="10.3"/><circle cx="140.2" cy="235.4" r="10.3"/><circle cx="188.4" cy="194" r="10.3"/><circle cx="230.8" cy="194" r="10.3"/><circle cx="273.6" cy="195" r="10.3"/><circle cx="355" cy="194" r="10.3"/><circle cx="209.4" cy="237.5" r="10.3"/><circle cx="316.4" cy="239" r="10.3"/><circle cx="273.6" cy="279.7" r="10.3"/><circle cx="316.4" cy="279.7" r="10.3"/><circle cx="355" cy="279.7" r="10.3"/><circle cx="33.2" cy="331" r="10.3"/><circle cx="52.4" cy="331" r="10.3"/><circle cx="70.6" cy="325.7" r="10.3"/><circle cx="89.9" cy="331" r="10.3"/><circle cx="81.3" cy="354.6" r="10.3"/><circle cx="241.4" cy="376" r="10.3"/><circle cx="277.8" cy="376" r="10.3"/><circle cx="316.4" cy="365.3" r="10.3"/><circle cx="355" cy="365.3" r="10.3"/><circle cx="487.3" cy="194.7" r="10.3"/><circle cx="516.6" cy="205.4" r="10.3"/><circle cx="401.6" cy="237.5" r="10.3"/><circle cx="444.5" cy="237.5" r="10.3"/><circle cx="444.5" cy="279.7" r="10.3"/><circle cx="487.3" cy="279.7" r="10.3"/><circle cx="525.8" cy="237.5" r="10.3"/><circle cx="525.8" cy="277.5" r="10.3"/><circle cx="401.6" cy="323.1" r="10.3"/><circle cx="525.8" cy="320.3" r="10.3"/><circle cx="448.1" cy="341.7" r="10.3"/><circle cx="482.3" cy="341.7" r="10.3"/><circle cx="444.5" cy="365.3" r="10.3"/><circle cx="525.8" cy="365.3" r="10.3"/><circle cx="60.6" cy="407.8" r="10.3"/><circle cx="92.5" cy="407.8" r="10.3"/><circle cx="60.6" cy="450.7" r="10.3"/><circle cx="92.5" cy="493.5" r="10.3"/><circle cx="60.6" cy="535.8" r="10.3"/><circle cx="92.5" cy="578.6" r="10.3"/><circle cx="60.6" cy="621.5" r="10.3"/><circle cx="241.4" cy="440" r="10.3"/><circle cx="277.8" cy="444.2" r="10.3"/><circle cx="355.3" cy="450.7" r="10.3"/><circle cx="312.5" cy="478.5" r="10.3"/><circle cx="241.4" cy="514.4" r="10.3"/><circle cx="273.5" cy="535.8" r="10.3"/><circle cx="355.3" cy="535.8" r="10.3"/><circle cx="241.4" cy="578.6" r="10.3"/><circle cx="316.4" cy="578.6" r="10.3"/><circle cx="275.7" cy="619" r="10.3"/><circle cx="355" cy="621.5" r="10.3"/><circle cx="401.6" cy="407.8" r="10.3"/><circle cx="487.3" cy="408.3" r="10.3"/><circle cx="444.5" cy="450.7" r="10.3"/><circle cx="525.8" cy="450.7" r="10.3"/><circle cx="448.5" cy="478" r="10.3"/><circle cx="401.6" cy="493.5" r="10.3"/><circle cx="487.3" cy="493.5" r="10.3"/><circle cx="401.6" cy="578.6" r="10.3"/><circle cx="482.3" cy="580.8" r="10.3"/><circle cx="525.8" cy="578.6" r="10.3"/><circle cx="401.6" cy="621.5" r="10.3"/><circle cx="448.5" cy="615.5" r="10.3"/><circle cx="487.3" cy="621.5" r="10.3"/><circle cx="241.3" cy="653.8" r="10.3"/><circle cx="315.7" cy="663.5" r="10.3"/><circle cx="401.0" cy="663.5" r="10.3"/><circle cx="486.4" cy="663.5" r="10.3"/><circle cx="59.7" cy="706.1" r="10.3"/><circle cx="273.0" cy="706.1" r="10.3"/><circle cx="358.4" cy="706.1" r="10.3"/><circle cx="443.7" cy="706.1" r="10.3"/><circle cx="529.0" cy="706.1" r="10.3"/><circle cx="315.7" cy="748.8" r="10.3"/><circle cx="401.0" cy="748.8" r="10.3"/><circle cx="614.4" cy="620.8" r="10.3"/><circle cx="699.7" cy="620.8" r="10.3"/><circle cx="785.1" cy="620.8" r="10.3"/><circle cx="870.4" cy="620.8" r="10.3"/><circle cx="913.1" cy="620.8" r="10.3"/><circle cx="827.7" cy="578.1" r="10.3"/><circle cx="913.1" cy="578.1" r="10.3"/><circle cx="955.7" cy="578.1" r="10.3"/><circle cx="571.7" cy="663.5" r="10.3"/><circle cx="657.1" cy="663.5" r="10.3"/><circle cx="742.4" cy="663.5" r="10.3"/><circle cx="614.4" cy="706.1" r="10.3"/><circle cx="699.7" cy="706.1" r="10.3"/><circle cx="742.4" cy="706.1" r="10.3"/><circle cx="785.1" cy="706.1" r="10.3"/><circle cx="827.7" cy="706.1" r="10.3"/><circle cx="870.4" cy="706.1" r="10.3"/><circle cx="913.1" cy="706.1" r="10.3"/><circle cx="955.7" cy="706.1" r="10.3"/><circle cx="742.4" cy="748.8" r="10.3"/><circle cx="785.1" cy="748.8" r="10.3"/><circle cx="827.7" cy="748.8" r="10.3"/><circle cx="870.4" cy="748.8" r="10.3"/><circle cx="913.1" cy="748.8" r="10.3"/><circle cx="870.4" cy="791.5" r="10.3"/><circle cx="955.7" cy="791.5" r="10.3"/><circle cx="913.1" cy="834.1" r="10.3"/><circle cx="998.4" cy="834.1" r="10.3"/><circle cx="955.7" cy="876.8" r="10.3"/><circle cx="1041.1" cy="876.8" r="10.3"/><circle cx="998.4" cy="919.5" r="10.3"/><circle cx="1083.8" cy="919.5" r="10.3"/><circle cx="955.7" cy="962.1" r="10.3"/><circle cx="1041.1" cy="962.1" r="10.3"/><circle cx="1041.1" cy="194.1" r="10.3"/><circle cx="998.4" cy="236.8" r="10.3"/><circle cx="1041.1" cy="236.8" r="10.3"/><circle cx="1083.8" cy="236.8" r="10.3"/><circle cx="1083.8" cy="322.1" r="10.3"/><circle cx="955.7" cy="364.8" r="10.3"/><circle cx="1041.1" cy="364.8" r="10.3"/><circle cx="998.4" cy="407.4" r="10.3"/><circle cx="1083.8" cy="407.4" r="10.3"/><circle cx="955.7" cy="450.1" r="10.3"/><circle cx="1041.1" cy="450.1" r="10.3"/><circle cx="913.1" cy="492.8" r="10.3"/><circle cx="998.4" cy="492.8" r="10.3"/><circle cx="1083.8" cy="492.8" r="10.3"/><circle cx="1169.1" cy="492.8" r="10.3"/><circle cx="1254.4" cy="492.8" r="10.3"/><circle cx="870.4" cy="535.4" r="10.3"/><circle cx="955.7" cy="535.4" r="10.3"/><circle cx="1041.1" cy="535.4" r="10.3"/><circle cx="1126.4" cy="535.4" r="10.3"/><circle cx="1211.8" cy="535.4" r="10.3"/><circle cx="1297.1" cy="535.4" r="10.3"/><circle cx="1169.1" cy="578.1" r="10.3"/><circle cx="1254.4" cy="578.1" r="10.3"/><circle cx="1339.8" cy="578.1" r="10.3"/><circle cx="1425.1" cy="578.1" r="10.3"/><circle cx="92" cy="663" r="10.3"/><circle cx="92" cy="750" r="10.3"/><circle cx="241.3" cy="750" r="10.3"/><circle cx="483" cy="750" r="10.3"/></g>
<clipPath id="ovc"><polygon points="1308.2,498.1 1565.2,498.1 1579.2,515 1605,515 1605,525.2 1584,544.9 1320.9,544.9 1308.2,531.8"/></clipPath><linearGradient id="gOv" gradientUnits="userSpaceOnUse" x1="1370" y1="0" x2="1450" y2="0"><stop offset="0" stop-color="#333333"/><stop offset="0.3" stop-color="#4c4c4c"/><stop offset="0.6" stop-color="#666666"/><stop offset="0.85" stop-color="#737373"/><stop offset="1" stop-color="#787878"/></linearGradient><g clip-path="url(#ovc)"><g filter="url(#cm)"><rect x="1300" y="490" width="320" height="60" fill="#787878"/><rect x="1360" y="490" width="90" height="60" fill="url(#gOv)"/><g filter="url(#b3)"><ellipse cx="1377" cy="506" rx="7" ry="9" fill="#242424"/><ellipse cx="1396" cy="512" rx="10" ry="8" fill="#454545"/><ellipse cx="1392" cy="543" rx="12" ry="5" fill="#1f1f1f"/><ellipse cx="1397" cy="529" rx="13" ry="8" fill="#9e9e9e" transform="rotate(-25 1397 529)"/><ellipse cx="1394" cy="529.5" rx="8" ry="5" fill="#bdbdbd"/><ellipse cx="1415" cy="522" rx="6" ry="10" fill="#6b6b6b"/><polygon points="1552,494 1572,494 1586,512 1610,512 1610,528 1588,550 1560,550 1566,530 1548,520" fill="#4c4c4c"/><ellipse cx="1562" cy="521" rx="12" ry="11" fill="#999999"/><ellipse cx="1568" cy="521" rx="6" ry="6" fill="#b8b8b8"/><ellipse cx="1600" cy="520.5" rx="6" ry="6" fill="#808080"/><ellipse cx="1582" cy="540" rx="9" ry="6" fill="#262626"/></g><g filter="url(#b2)"><ellipse cx="1577" cy="521" rx="3.4" ry="3.4" fill="#0f0f0f"/></g></g><rect x="1300" y="490" width="70.5" height="60" fill="#3c30b9"/><ellipse cx="1313.6" cy="508.6" rx="2.6" ry="2.2" fill="#1a50e0"/><ellipse cx="1378.4" cy="504" rx="2.9" ry="3.2" fill="#f51414"/><ellipse cx="1408" cy="504" rx="2.9" ry="3.2" fill="#f51414"/><ellipse cx="1378.4" cy="521" rx="2.9" ry="3.2" fill="#f51414"/><ellipse cx="1408" cy="521" rx="2.9" ry="3.2" fill="#f51414"/><rect x="1389.4" y="526" width="8.6" height="6" fill="#f51414"/><rect x="1392" y="527.6" width="3.4" height="2.8" fill="#a04040"/><ellipse cx="1569.6" cy="520.6" rx="3" ry="3.6" fill="#f51414"/><polygon points="1595.6,520.5 1599,517 1602.4,520.5 1599,524" fill="#5ae03c"/></g>
<circle cx="277.8" cy="307.5" r="9.4" fill="#2b2b2b"/><circle cx="277.8" cy="307.5" r="3" fill="#3a3a3a"/><circle cx="277.8" cy="341.7" r="9.4" fill="#2b2b2b"/><circle cx="277.8" cy="341.7" r="3" fill="#3a3a3a"/><circle cx="312.5" cy="580.5" r="9.4" fill="#2b2b2b"/><circle cx="312.5" cy="580.5" r="3" fill="#3a3a3a"/><circle cx="275.7" cy="618.5" r="9.4" fill="#2b2b2b"/><circle cx="275.7" cy="618.5" r="3" fill="#3a3a3a"/><rect x="277.8" y="657.5" width="1" height="104" fill="#7e1414" opacity="0.8"/><path d="M2,297.2 H512.5 V1004" fill="none" stroke="#ffffff" stroke-width="1" opacity="0.62"/>
<g fill="#ffffff" font-family='"Liberation Sans", sans-serif'><text x="103.1" y="190.4" font-size="12" textLength="13.4" lengthAdjust="spacingAndGlyphs">(L)</text><text x="160.0" y="190.4" font-size="12" textLength="13.4" lengthAdjust="spacingAndGlyphs">(L)</text><text x="101.0" y="211.8" font-size="12" textLength="18.4" lengthAdjust="spacingAndGlyphs">R52</text><text x="103.2" y="227.1" font-size="12" textLength="13.4" lengthAdjust="spacingAndGlyphs">(L)</text><text x="158.8" y="211.8" font-size="12" textLength="18.4" lengthAdjust="spacingAndGlyphs">R50</text><text x="161.0" y="227.1" font-size="12" textLength="13.4" lengthAdjust="spacingAndGlyphs">(L)</text><text x="101.0" y="247.6" font-size="12" textLength="18.4" lengthAdjust="spacingAndGlyphs">R72</text><text x="103.2" y="262.9" font-size="12" textLength="13.4" lengthAdjust="spacingAndGlyphs">(L)</text><text x="158.8" y="247.6" font-size="12" textLength="18.4" lengthAdjust="spacingAndGlyphs">R70</text><text x="161.0" y="262.9" font-size="12" textLength="13.4" lengthAdjust="spacingAndGlyphs">(L)</text><text x="101.0" y="284.0" font-size="12" textLength="18.4" lengthAdjust="spacingAndGlyphs">R73</text><text x="103.2" y="299.3" font-size="12" textLength="13.4" lengthAdjust="spacingAndGlyphs">(L)</text><text x="158.8" y="284.0" font-size="12" textLength="18.4" lengthAdjust="spacingAndGlyphs">R74</text><text x="161.0" y="299.3" font-size="12" textLength="13.4" lengthAdjust="spacingAndGlyphs">(L)</text><text x="133.1" y="318.3" font-size="12" textLength="18.4" lengthAdjust="spacingAndGlyphs">R62</text><text x="135.3" y="333.3" font-size="12" textLength="13.4" lengthAdjust="spacingAndGlyphs">(L)</text><text x="133.8" y="343.9" font-size="12" textLength="18.4" lengthAdjust="spacingAndGlyphs">R60</text><text x="136.0" y="359.5" font-size="12" textLength="13.4" lengthAdjust="spacingAndGlyphs">(L)</text><text x="169.5" y="330.6" font-size="12" textLength="18.4" lengthAdjust="spacingAndGlyphs">R57</text><text x="171.7" y="346.5" font-size="12" textLength="13.4" lengthAdjust="spacingAndGlyphs">(L)</text><text x="585.2" y="186.1" font-size="12" textLength="18.4" lengthAdjust="spacingAndGlyphs">R53</text><text x="642.3" y="186.1" font-size="12" textLength="18.4" lengthAdjust="spacingAndGlyphs">R58</text><text x="587.4" y="201.1" font-size="12" textLength="13.4" lengthAdjust="spacingAndGlyphs">(L)</text><text x="644.5" y="201.1" font-size="12" textLength="13.4" lengthAdjust="spacingAndGlyphs">(L)</text><text x="585.2" y="224.0" font-size="12" textLength="18.4" lengthAdjust="spacingAndGlyphs">R63</text><text x="587.4" y="239.0" font-size="12" textLength="13.4" lengthAdjust="spacingAndGlyphs">(L)</text><text x="642.3" y="224.0" font-size="12" textLength="18.4" lengthAdjust="spacingAndGlyphs">R55</text><text x="644.5" y="239.0" font-size="12" textLength="13.4" lengthAdjust="spacingAndGlyphs">(L)</text><text x="585.2" y="261.1" font-size="12" textLength="18.4" lengthAdjust="spacingAndGlyphs">R71</text><text x="587.4" y="276.1" font-size="12" textLength="13.4" lengthAdjust="spacingAndGlyphs">(L)</text><text x="642.3" y="261.1" font-size="12" textLength="18.4" lengthAdjust="spacingAndGlyphs">R51</text><text x="644.5" y="276.1" font-size="12" textLength="13.4" lengthAdjust="spacingAndGlyphs">(L)</text><text x="585.2" y="297.3" font-size="12" textLength="18.4" lengthAdjust="spacingAndGlyphs">R67</text><text x="587.4" y="312.3" font-size="12" textLength="13.4" lengthAdjust="spacingAndGlyphs">(L)</text><text x="642.3" y="297.3" font-size="12" textLength="18.4" lengthAdjust="spacingAndGlyphs">R69</text><text x="644.5" y="312.3" font-size="12" textLength="13.4" lengthAdjust="spacingAndGlyphs">(L)</text><text x="585.2" y="333.3" font-size="12" textLength="18.4" lengthAdjust="spacingAndGlyphs">R68</text><text x="587.4" y="348.3" font-size="12" textLength="13.4" lengthAdjust="spacingAndGlyphs">(L)</text><text x="642.3" y="333.3" font-size="12" textLength="18.4" lengthAdjust="spacingAndGlyphs">R66</text><text x="644.5" y="348.3" font-size="12" textLength="13.4" lengthAdjust="spacingAndGlyphs">(L)</text><text x="657.6" y="397.5" font-size="12" textLength="17.8" lengthAdjust="spacingAndGlyphs">L20</text><text x="659.5" y="412.8" font-size="12" textLength="13.4" lengthAdjust="spacingAndGlyphs">(L)</text><text x="373.0" y="379.7" font-size="12" textLength="13.2" lengthAdjust="spacingAndGlyphs">U3</text><text x="372.6" y="395.3" font-size="12" textLength="13.4" lengthAdjust="spacingAndGlyphs">(L)</text><text x="1023.9" y="602.1" font-size="12" textLength="25.4" lengthAdjust="spacingAndGlyphs">C465</text><text x="1029.6" y="617.3" font-size="12" textLength="13.4" lengthAdjust="spacingAndGlyphs">(L)</text><text x="1301.2" y="489.5" font-size="12" textLength="26.2" lengthAdjust="spacingAndGlyphs">C468</text><text x="1307.3" y="504.0" font-size="12" textLength="13.4" lengthAdjust="spacingAndGlyphs">(L)</text><text x="1339.8" y="499.4" font-size="12" textLength="26.2" lengthAdjust="spacingAndGlyphs">C467</text><text x="1345.9" y="513.5" font-size="12" textLength="13.4" lengthAdjust="spacingAndGlyphs">(L)</text><text x="1478.1" y="448.0" font-size="12" textLength="23.2" lengthAdjust="spacingAndGlyphs">CN6</text><text x="1482.7" y="463.3" font-size="12" textLength="13.4" lengthAdjust="spacingAndGlyphs">(L)</text><text x="2.9" y="736.5" font-size="12" textLength="17.0" lengthAdjust="spacingAndGlyphs">n1]</text></g>
</g></svg>
<svg class="abs" style="left:0;top:0" width="1763" height="180.5" viewBox="0 0 1763 180.5" font-family='"Liberation Sans", sans-serif'><defs><linearGradient id="rbg" x1="0" y1="0" x2="0" y2="1"><stop offset="0" stop-color="#fcfcfc"/><stop offset="0.45" stop-color="#f3f3f3"/><stop offset="1" stop-color="#e5e5e5"/></linearGradient><linearGradient id="fileg" x1="0" y1="0" x2="0" y2="1"><stop offset="0" stop-color="#3467b8"/><stop offset="0.5" stop-color="#1f4e9e"/><stop offset="1" stop-color="#2a5cb0"/></linearGradient><linearGradient id="gsq" x1="0" y1="0" x2="1" y2="1"><stop offset="0" stop-color="#aebdf0"/><stop offset="0.6" stop-color="#eef1fc"/><stop offset="1" stop-color="#ffffff"/></linearGradient><linearGradient id="gsq2" x1="1" y1="0" x2="0" y2="1"><stop offset="0" stop-color="#a9b8ee"/><stop offset="0.7" stop-color="#f4f6fd"/><stop offset="1" stop-color="#ffffff"/></linearGradient><linearGradient id="gbl" x1="0" y1="0" x2="0" y2="1"><stop offset="0" stop-color="#dfe6fb"/><stop offset="1" stop-color="#a8b9ec"/></linearGradient><linearGradient id="gfun" x1="0" y1="0" x2="1" y2="0"><stop offset="0" stop-color="#d9d9d9"/><stop offset="0.5" stop-color="#f3f3f3"/><stop offset="1" stop-color="#8f8f8f"/></linearGradient><linearGradient id="gwin" x1="0" y1="0" x2="1" y2="1"><stop offset="0" stop-color="#ffffff"/><stop offset="1" stop-color="#c3cdf0"/></linearGradient><linearGradient id="ggr" x1="0" y1="0" x2="1" y2="0"><stop offset="0" stop-color="#2f8f3a"/><stop offset="0.5" stop-color="#a6e22a"/><stop offset="1" stop-color="#2f8f3a"/></linearGradient><radialGradient id="glens" cx="0.4" cy="0.35" r="0.7"><stop offset="0" stop-color="#ffffff"/><stop offset="1" stop-color="#b9cdf2"/></radialGradient><linearGradient id="ghan" x1="0" y1="0" x2="1" y2="1"><stop offset="0" stop-color="#ffe066"/><stop offset="1" stop-color="#c89200"/></linearGradient></defs><rect x="0" y="0" width="1763" height="182" fill="#ffffff"/><rect x="0" y="0" width="1763" height="1.5" fill="#8a8a8a"/><rect x="2" y="38" width="1761" height="30" fill="#f1f1f1"/><rect x="2.5" y="67.5" width="1762" height="111.3" rx="3" fill="url(#rbg)" stroke="#c4c4c4" stroke-width="1"/><rect x="2" y="179.4" width="1761" height="1.2" fill="#b4b4b4"/><rect x="0" y="0" width="2" height="182" fill="#d8dce6"/><rect x="0" y="40" width="2" height="28" fill="#1b3f94"/><rect x="2.5" y="40.5" width="47" height="26" fill="url(#fileg)" stroke="#163a7e" stroke-width="1"/><text x="13.6" y="60.1" font-size="16" fill="#ffffff" font-weight="normal" textLength="24.0" lengthAdjust="spacingAndGlyphs">File</text><path d="M54.5,68 V44 Q54.5,40.5 58,40.5 H116 Q119.5,40.5 119.5,44 V68" fill="#fafafa" stroke="#b5b5b5" stroke-width="1"/><rect x="55" y="66.5" width="64" height="2.5" fill="#fbfbfb"/><text x="65.5" y="60.1" font-size="16" fill="#303030" font-weight="normal" stroke="#f3f3f3" stroke-width="0.12" textLength="42.4" lengthAdjust="spacingAndGlyphs">Home</text><text x="136.4" y="60.1" font-size="16" fill="#303030" font-weight="normal" stroke="#f3f3f3" stroke-width="0.12" textLength="113.7" lengthAdjust="spacingAndGlyphs">Restriction/Block</text><text x="278.7" y="60.1" font-size="16" fill="#303030" font-weight="normal" stroke="#f3f3f3" stroke-width="0.12" textLength="35.7" lengthAdjust="spacingAndGlyphs">Track</text><text x="342.2" y="60.1" font-size="16" fill="#303030" font-weight="normal" stroke="#f3f3f3" stroke-width="0.12" textLength="55.2" lengthAdjust="spacingAndGlyphs">Area Fill</text><text x="425.9" y="60.1" font-size="16" fill="#303030" font-weight="normal" stroke="#f3f3f3" stroke-width="0.12" textLength="80.3" lengthAdjust="spacingAndGlyphs">Component</text><text x="534.0" y="60.1" font-size="16" fill="#303030" font-weight="normal" stroke="#f3f3f3" stroke-width="0.12" textLength="43.1" lengthAdjust="spacingAndGlyphs">Figure</text><text x="605.3" y="60.1" font-size="16" fill="#303030" font-weight="normal" stroke="#f3f3f3" stroke-width="0.12" textLength="56.8" lengthAdjust="spacingAndGlyphs">Drawing</text><text x="691.3" y="60.1" font-size="16" fill="#303030" font-weight="normal" stroke="#f3f3f3" stroke-width="0.12" textLength="41.1" lengthAdjust="spacingAndGlyphs">Check</text><text x="760.6" y="60.1" font-size="16" fill="#303030" font-weight="normal" stroke="#f3f3f3" stroke-width="0.12" textLength="40.4" lengthAdjust="spacingAndGlyphs">Utility</text><text x="829.5" y="60.1" font-size="16" fill="#303030" font-weight="normal" stroke="#f3f3f3" stroke-width="0.12" textLength="55.2" lengthAdjust="spacingAndGlyphs">Package</text><text x="913.2" y="60.1" font-size="16" fill="#303030" font-weight="normal" stroke="#f3f3f3" stroke-width="0.12" textLength="81.6" lengthAdjust="spacingAndGlyphs">Multi-Board</text><text x="1023.6" y="60.1" font-size="16" fill="#303030" font-weight="normal" stroke="#f3f3f3" stroke-width="0.12" textLength="54.2" lengthAdjust="spacingAndGlyphs">Analysis</text><text x="1107.0" y="60.1" font-size="16" fill="#303030" font-weight="normal" stroke="#f3f3f3" stroke-width="0.12" textLength="32.7" lengthAdjust="spacingAndGlyphs">View</text><text x="967.8" y="25.7" font-size="15" fill="#111" font-weight="normal" stroke="#ffffff" stroke-width="0.12" textLength="363.2" lengthAdjust="spacingAndGlyphs">Design Force - [ DF_MAIN_SIdemo_MRA_EMC.dsgn:2* ]</text><polygon points="12,25.5 17,10.5 30,18.5" fill="#1a1a1a"/><polygon points="17,10.5 22,13.5 19,19 14.5,18" fill="#2b2b2b"/><polygon points="12,25.5 15,17.5 21,20.5" fill="#1e63c8"/><polygon points="21,15 30,18.5 22,22" fill="#f2b705"/><polygon points="19.5,18 22.5,19.5 20.5,21.5" fill="#fff"/><rect x="42" y="8" width="1" height="22" fill="#c6c6c6"/><path d="M54.6,11 H69.6 L72,13.4 V27 H54.6 Z" fill="#6a55b8" stroke="#4a3a90" stroke-width="0.8"/><rect x="57.6" y="11.4" width="10.6" height="6.4" fill="#f1effa"/><rect x="58.4" y="21" width="9.4" height="6" fill="#d9d5ee"/><rect x="64.4" y="22" width="2.2" height="4" fill="#6a55b8"/><path d="M90.5,15.6 H95 Q99,16 98.6,20.4 Q98,24.6 93,25.5" fill="none" stroke="#9b9b9b" stroke-width="2"/><polygon points="88,15.4 92.6,11.4 92.6,19.6" fill="#9b9b9b"/><polygon points="110.8,16 117.8,16 114.3,20" fill="#8a8a8a"/><path d="M145,15.6 H141 Q137,16 137.4,20.4 Q138,24.6 143,25.5" fill="none" stroke="#b5b5b5" stroke-width="2"/><polygon points="148.4,15.4 143.8,11.4 143.8,19.6" fill="#b5b5b5"/><path d="M167,13 V26 L170,23.4 L172.4,28.4 L174.4,27.4 L172,22.6 L176,22.4 Z" fill="#f4f6fb" stroke="#8e98ad" stroke-width="1"/><path d="M172.5,10.5 L181.5,18.5 M181.5,10.5 L172.5,18.5" stroke="#ee1111" stroke-width="2.4"/><rect x="194.4" y="9.8" width="19" height="19" fill="#7ed321" stroke="#2d6b1e" stroke-width="1.2"/><path d="M204,13 V26 M197.4,19.4 H210.6" stroke="#ff0a0a" stroke-width="1.8"/><polygon points="204,11 201.4,14.4 206.6,14.4" fill="#ff0a0a"/><polygon points="204,27.8 201.4,24.4 206.6,24.4" fill="#ff0a0a"/><polygon points="195.6,19.4 199,16.8 199,22" fill="#ff0a0a"/><polygon points="212.4,19.4 209,16.8 209,22" fill="#ff0a0a"/><rect x="225" y="10.4" width="15.6" height="15.6" fill="#fff" stroke="#44597f" stroke-width="1.2"/><circle cx="233.4" cy="18" r="5.6" fill="#eef3fd" stroke="#3d5a98" stroke-width="1.6"/><path d="M237.6,22.4 L243,27.6" stroke="#d9a514" stroke-width="2.8" stroke-linecap="round"/><rect x="252.3" y="5.5" width="27" height="27.4" rx="3" fill="#7fdcf7" stroke="#2f8fd0" stroke-width="1.2"/><rect x="257" y="9.4" width="6.6" height="9" fill="#c9cdd6" stroke="#555" stroke-width="0.8"/><rect x="267.6" y="19.6" width="6.6" height="9" fill="#c9cdd6" stroke="#555" stroke-width="0.8"/><path d="M255.4,11 H257 M255.4,14 H257 M255.4,17 H257 M263.6,11 H265.2 M263.6,14 H265.2 M263.6,17 H265.2 M266,21.2 H267.6 M266,24.2 H267.6 M266,27.2 H267.6 M274.2,21.2 H275.8 M274.2,24.2 H275.8 M274.2,27.2 H275.8" stroke="#555" stroke-width="0.9"/><path d="M257,17.4 L266.6,27.4" stroke="#e01010" stroke-width="1.6"/><path d="M290,10.6 H305 Q307.6,10.6 307.6,13.4 V20 Q307.6,22.6 305,22.6 H299 L295.4,27 V22.6 H290 Q287.4,22.6 287.4,20 V13.4 Q287.4,10.6 290,10.6 Z" fill="#9a9a9a" stroke="#f08c1e" stroke-width="1.8"/><polygon points="313.6,16 320.4,16 317,20" fill="#444"/><rect x="335" y="15.4" width="20" height="5.6" fill="#1a1a1a"/><rect x="335" y="16.4" width="11" height="3.6" fill="#1fa53a"/><path d="M378.6,9.6 L381.6,11.4 L376.6,20.4 L373.6,18.6 Z" fill="#2f5fc0"/><path d="M371,26.6 H382 M376.4,26 V22.6 M372,22 Q377,25.6 381,20" fill="none" stroke="#2f4f98" stroke-width="1.6"/><circle cx="374.6" cy="20.6" r="1.6" fill="#2f5fc0"/><polygon points="393,16 399.8,16 396.4,20" fill="#444"/><rect x="413.4" y="8" width="1" height="22" fill="#c6c6c6"/><rect x="428" y="15.2" width="8.6" height="1.4" fill="#333"/><polygon points="428,18.6 436.6,18.6 432.3,23" fill="#333"/><rect x="213.8" y="70" width="1" height="108" fill="#b9b9b9"/><rect x="214.8" y="70" width="1" height="108" fill="#fdfdfd"/><rect x="384.7" y="70" width="1" height="108" fill="#b9b9b9"/><rect x="385.7" y="70" width="1" height="108" fill="#fdfdfd"/><rect x="555.7" y="70" width="1" height="108" fill="#b9b9b9"/><rect x="556.7" y="70" width="1" height="108" fill="#fdfdfd"/><rect x="736.8" y="70" width="1" height="108" fill="#b9b9b9"/><rect x="737.8" y="70" width="1" height="108" fill="#fdfdfd"/><rect x="912.9" y="70" width="1" height="108" fill="#b9b9b9"/><rect x="913.9" y="70" width="1" height="108" fill="#fdfdfd"/><rect x="1066.0" y="70" width="1" height="108" fill="#b9b9b9"/><rect x="1067.0" y="70" width="1" height="108" fill="#fdfdfd"/><rect x="1349.9" y="70" width="1" height="108" fill="#b9b9b9"/><rect x="1350.9" y="70" width="1" height="108" fill="#fdfdfd"/><rect x="1465.0" y="70" width="1" height="108" fill="#b9b9b9"/><rect x="1466.0" y="70" width="1" height="108" fill="#fdfdfd"/><text x="88.2" y="173.6" font-size="15" fill="#7d818a" font-weight="normal" stroke="#f3f3f3" stroke-width="0.12" textLength="34.5" lengthAdjust="spacingAndGlyphs">Track</text><text x="272.6" y="173.6" font-size="15" fill="#7d818a" font-weight="normal" stroke="#f3f3f3" stroke-width="0.12" textLength="54.3" lengthAdjust="spacingAndGlyphs">Area Fill</text><text x="448.5" y="173.6" font-size="15" fill="#7d818a" font-weight="normal" stroke="#f3f3f3" stroke-width="0.12" textLength="45.3" lengthAdjust="spacingAndGlyphs">Cutout</text><text x="627.9" y="173.6" font-size="15" fill="#7d818a" font-weight="normal" stroke="#f3f3f3" stroke-width="0.12" textLength="37.7" lengthAdjust="spacingAndGlyphs">Move</text><text x="793.1" y="173.6" font-size="15" fill="#7d818a" font-weight="normal" stroke="#f3f3f3" stroke-width="0.12" textLength="64.2" lengthAdjust="spacingAndGlyphs">Duplicate</text><text x="976.8" y="173.6" font-size="15" fill="#7d818a" font-weight="normal" stroke="#f3f3f3" stroke-width="0.12" textLength="26.9" lengthAdjust="spacingAndGlyphs">Edit</text><text x="1166.2" y="173.6" font-size="15" fill="#7d818a" font-weight="normal" stroke="#f3f3f3" stroke-width="0.12" textLength="85.3" lengthAdjust="spacingAndGlyphs">Design Rules</text><text x="1387.7" y="173.6" font-size="15" fill="#7d818a" font-weight="normal" stroke="#f3f3f3" stroke-width="0.12" textLength="40.1" lengthAdjust="spacingAndGlyphs">Check</text><g transform="translate(9.0,75.0)"><path d="M6,25 V8.5 H23" fill="none" stroke="#2d4672" stroke-width="3.2"/><circle cx="6" cy="31.4" r="4.6" fill="#fff" stroke="#2d4672" stroke-width="3"/><circle cx="28" cy="7" r="1.5" fill="#3b5a94"/><circle cx="33" cy="4.6" r="1.5" fill="#3b5a94"/><circle cx="38" cy="2.2" r="1.5" fill="#3b5a94"/></g><text x="8.6" y="131.9" font-size="15" fill="#1e2431" font-weight="normal" stroke="#f3f3f3" stroke-width="0.12" textLength="39.8" lengthAdjust="spacingAndGlyphs">Route</text><polygon points="24.9,144.9 31.9,144.9 28.4,148.9" fill="#3a3a3a"/><g transform="translate(57.0,75.0)"><path d="M11,12 L18,3.6 H37" fill="none" stroke="#a6a6a6" stroke-width="2.6"/><path d="M6.2,25 V17 Q6.2,13 10,11.5" fill="none" stroke="#2d4672" stroke-width="3.2"/><path d="M9.5,12 H37" stroke="#ff0a0a" stroke-width="3.4" stroke-linecap="round"/><path d="M26,17 V28" stroke="#ff0a0a" stroke-width="2.6"/><polygon points="20,26 32,26 26,34" fill="#ff0a0a"/><circle cx="6.2" cy="31.4" r="4.6" fill="#fff" stroke="#2d4672" stroke-width="3"/></g><text x="57.6" y="131.9" font-size="15" fill="#1e2431" font-weight="normal" stroke="#f3f3f3" stroke-width="0.12" textLength="37.8" lengthAdjust="spacingAndGlyphs">Move</text><text x="58.5" y="151.4" font-size="15" fill="#1e2431" font-weight="normal" stroke="#f3f3f3" stroke-width="0.12" textLength="35.9" lengthAdjust="spacingAndGlyphs">Track</text><g transform="translate(106.0,73.0)"><ellipse cx="8" cy="15.5" rx="6.6" ry="3.6" fill="#f4f6fc" stroke="#5b6f99" stroke-width="1.1"/><ellipse cx="8" cy="10" rx="6.6" ry="3.6" fill="#f4f6fc" stroke="#5b6f99" stroke-width="1.1"/><ellipse cx="8" cy="4.5" rx="6.6" ry="3.6" fill="#f4f6fc" stroke="#5b6f99" stroke-width="1.1"/><circle cx="8" cy="8.3" r="0.9" fill="#333"/><circle cx="8" cy="13.8" r="0.9" fill="#333"/></g><text x="125.7" y="88.8" font-size="15" fill="#1e2431" font-weight="normal" stroke="#f3f3f3" stroke-width="0.12" textLength="58.3" lengthAdjust="spacingAndGlyphs">Padstack</text><polygon points="188.8,79.9 195.8,79.9 192.3,83.9" fill="#3a3a3a"/><g transform="translate(104.0,102.0)"><ellipse cx="10" cy="7" rx="9.3" ry="6" fill="url(#gbl)" stroke="#4a5e8c" stroke-width="1.1"/><ellipse cx="10" cy="6" rx="7.5" ry="4" fill="#f4f6fc" opacity="0.8"/></g><text x="125.7" y="114.5" font-size="15" fill="#1e2431" font-weight="normal" stroke="#f3f3f3" stroke-width="0.12" textLength="24.4" lengthAdjust="spacingAndGlyphs">Pad</text><g transform="translate(232.0,74.0)"><rect x="1" y="1" width="38" height="37.5" fill="url(#gsq2)" stroke="#2d4672" stroke-width="2"/><rect x="23" y="-1" width="18" height="13" fill="#fbfbfb"/><path d="M23,1 V12 H39" fill="none" stroke="#2d4672" stroke-width="0"/><polygon points="19.5,25.0 39.6,5.7 34.4,0.3 14.3,19.6" fill="#3f6cb4"/><polygon points="11.0,28.0 19.5,25.0 14.3,19.6" fill="#e8eefb" stroke="#3f6cb4" stroke-width="0.8"/><polygon points="11.0,28.0 14.7,26.5 12.6,24.3" fill="#3f6cb4"/><polygon points="36.6,8.6 39.6,5.7 34.4,0.3 31.4,3.2" fill="#f4f6fb" stroke="#3f6cb4" stroke-width="0.8"/></g><text x="224.9" y="131.9" font-size="15" fill="#1e2431" font-weight="normal" stroke="#f3f3f3" stroke-width="0.12" textLength="53.9" lengthAdjust="spacingAndGlyphs">Polygon</text><g transform="translate(283.0,73.5)"><rect x="0.6" y="4" width="18.8" height="14.6" fill="url(#gsq2)" stroke="#2d4672" stroke-width="1.1"/><polygon points="9.2,11.7 19.2,2.8 16.8,0.2 6.8,9.0" fill="#3f6cb4"/><polygon points="5.0,13.0 9.2,11.7 6.8,9.0" fill="#e8eefb" stroke="#3f6cb4" stroke-width="0.8"/><polygon points="5.0,13.0 6.8,12.4 5.9,11.3" fill="#3f6cb4"/><polygon points="17.7,4.2 19.2,2.8 16.8,0.2 15.3,1.5" fill="#f4f6fb" stroke="#3f6cb4" stroke-width="0.8"/></g><text x="304.8" y="88.8" font-size="15" fill="#1e2431" font-weight="normal" stroke="#f3f3f3" stroke-width="0.12" textLength="66.5" lengthAdjust="spacingAndGlyphs">Rectangle</text><g transform="translate(283.0,99.0)"><circle cx="9.5" cy="10.5" r="8.6" fill="url(#gsq2)" stroke="#2d4672" stroke-width="1.1"/><polygon points="11.2,10.8 19.7,3.4 17.3,0.6 8.8,8.0" fill="#3f6cb4"/><polygon points="7.0,12.0 11.2,10.8 8.8,8.0" fill="#e8eefb" stroke="#3f6cb4" stroke-width="0.8"/><polygon points="7.0,12.0 8.8,11.4 7.9,10.3" fill="#3f6cb4"/><polygon points="18.2,4.7 19.7,3.4 17.3,0.6 15.8,1.9" fill="#f4f6fb" stroke="#3f6cb4" stroke-width="0.8"/></g><text x="304.8" y="114.5" font-size="15" fill="#1e2431" font-weight="normal" stroke="#f3f3f3" stroke-width="0.12" textLength="37.5" lengthAdjust="spacingAndGlyphs">Circle</text><g transform="translate(283.0,125.0)"><path d="M8,2 Q11,10 1,15 Q6,20 12,16 Q18,12 17,5 Z" fill="url(#gsq2)" stroke="#2d4672" stroke-width="1.1"/><polygon points="12.1,9.7 19.7,2.8 17.3,0.2 9.7,7.0" fill="#3f6cb4"/><polygon points="8.0,11.0 12.1,9.7 9.7,7.0" fill="#e8eefb" stroke="#3f6cb4" stroke-width="0.8"/><polygon points="8.0,11.0 9.8,10.3 8.8,9.3" fill="#3f6cb4"/><polygon points="18.2,4.2 19.7,2.8 17.3,0.2 15.8,1.5" fill="#f4f6fb" stroke="#3f6cb4" stroke-width="0.8"/></g><text x="304.8" y="140.6" font-size="15" fill="#1e2431" font-weight="normal" stroke="#f3f3f3" stroke-width="0.12" textLength="22.9" lengthAdjust="spacingAndGlyphs">Arc</text><g transform="translate(403.0,74.0)"><rect x="1" y="1" width="38" height="37.5" fill="url(#gsq2)" stroke="#2d4672" stroke-width="2"/><path d="M7,9 H24 V16.5 H15.5 V25 H7 Z" fill="#fff" stroke="#5a6f9c" stroke-width="1.2"/></g><text x="395.7" y="131.9" font-size="15" fill="#1e2431" font-weight="normal" stroke="#f3f3f3" stroke-width="0.12" textLength="53.8" lengthAdjust="spacingAndGlyphs">Polygon</text><g transform="translate(454.0,73.2)"><rect x="0.6" y="0.6" width="18.8" height="18.6" fill="url(#gsq2)" stroke="#2d4672" stroke-width="1.1"/><rect x="3.5" y="6.5" width="12" height="6" fill="#fff" stroke="#5a6f9c" stroke-width="1"/></g><text x="475.9" y="88.8" font-size="15" fill="#1e2431" font-weight="normal" stroke="#f3f3f3" stroke-width="0.12" textLength="66.4" lengthAdjust="spacingAndGlyphs">Rectangle</text><g transform="translate(454.0,99.3)"><rect x="0.6" y="0.6" width="18.8" height="18.6" fill="url(#gsq2)" stroke="#2d4672" stroke-width="1.1"/><circle cx="10.5" cy="12" r="4" fill="#fff" stroke="#5a6f9c" stroke-width="1"/></g><text x="475.9" y="114.5" font-size="15" fill="#1e2431" font-weight="normal" stroke="#f3f3f3" stroke-width="0.12" textLength="37.5" lengthAdjust="spacingAndGlyphs">Circle</text><g transform="translate(454.0,125.4)"><rect x="0.6" y="0.6" width="18.8" height="18.6" fill="url(#gsq2)" stroke="#2d4672" stroke-width="1.1"/><path d="M8.5,16 Q10,10.5 15,9.5 Q15.5,14.5 8.5,16 Z" fill="#fff" stroke="#5a6f9c" stroke-width="1"/></g><text x="475.9" y="140.6" font-size="15" fill="#1e2431" font-weight="normal" stroke="#f3f3f3" stroke-width="0.12" textLength="22.7" lengthAdjust="spacingAndGlyphs">Arc</text><g transform="translate(568.0,73.0)"><rect x="0.6" y="0.6" width="11" height="13" fill="#ffffff" stroke="#a9a9a9" stroke-width="1"/><rect x="8.2" y="6" width="11" height="13" fill="url(#gbl)" stroke="#2d4672" stroke-width="1"/><path d="M4,4 L12,11" stroke="#ff0a0a" stroke-width="2.2"/><polygon points="15.5,14 8.5,12.8 13.5,8" fill="#ff0a0a"/></g><text x="590.1" y="88.8" font-size="15" fill="#1e2431" font-weight="normal" stroke="#f3f3f3" stroke-width="0.12" textLength="32.9" lengthAdjust="spacingAndGlyphs">Drag</text><g transform="translate(568.0,99.0)"><polygon points="5,1 19,1 15,7 1,7" fill="#ffffff" stroke="#a9a9a9" stroke-width="1"/><polygon points="5,13 19,13 15,19.4 0.6,19.4" fill="url(#gbl)" stroke="#2d4672" stroke-width="1"/><path d="M10.5,7.5 V13" stroke="#ff0a0a" stroke-width="2.4"/><polygon points="6.5,11.5 14.5,11.5 10.5,16.5" fill="#ff0a0a"/></g><text x="590.1" y="114.5" font-size="15" fill="#1e2431" font-weight="normal" stroke="#f3f3f3" stroke-width="0.12" textLength="35.5" lengthAdjust="spacingAndGlyphs">Layer</text><g transform="translate(568.0,125.0)"><rect x="0.6" y="1.5" width="10" height="11.5" fill="#ffffff" stroke="#a9a9a9" stroke-width="1"/><rect x="8.5" y="8" width="9.5" height="11.4" fill="url(#gbl)" stroke="#2d4672" stroke-width="1"/><circle cx="9.3" cy="1.6" r="1.5" fill="#ff0a0a"/><circle cx="18" cy="8" r="1.5" fill="#ff0a0a"/><path d="M11,2.5 L15.5,5.6" stroke="#ff0a0a" stroke-width="1.1" stroke-dasharray="1.6 1"/><polygon points="16.8,6.6 13.6,6 15.6,3.8" fill="#ff0a0a"/></g><text x="590.1" y="140.6" font-size="15" fill="#1e2431" font-weight="normal" stroke="#f3f3f3" stroke-width="0.12" textLength="53.3" lengthAdjust="spacingAndGlyphs">Relative</text><g transform="translate(652.0,73.0)"><polygon points="11.3,11.3 11.3,16.2 0.4,16.2" fill="url(#gbl)" stroke="#2d4672" stroke-width="0.9"/><polygon points="13.9,4.1 19.5,16.2 13.9,16.2" fill="#fdfdfd" stroke="#a9a9a9" stroke-width="0.9"/><path d="M11.3,4.6 Q7,4.4 7,8.6" fill="none" stroke="#ff0a0a" stroke-width="1.5"/><polygon points="4.9,7.6 9.1,7.6 7,10.8" fill="#ff0a0a"/></g><text x="673.9" y="88.8" font-size="15" fill="#1e2431" font-weight="normal" stroke="#f3f3f3" stroke-width="0.12" textLength="44.3" lengthAdjust="spacingAndGlyphs">Rotate</text><g transform="translate(652.0,99.0)"><polygon points="8.6,2 8.6,17.4 0.8,17.4" fill="url(#gbl)" stroke="#2d4672" stroke-width="0.9"/><polygon points="11.4,2 19.2,17.4 11.4,17.4" fill="#fdfdfd" stroke="#a9a9a9" stroke-width="0.9"/><path d="M8,11.5 H15.5" stroke="#ff0a0a" stroke-width="2.4"/><polygon points="9,7.6 9,15.4 4,11.5" fill="#ff0a0a"/></g><text x="673.9" y="114.5" font-size="15" fill="#1e2431" font-weight="normal" stroke="#f3f3f3" stroke-width="0.12" textLength="24.3" lengthAdjust="spacingAndGlyphs">Flip</text><g transform="translate(652.0,125.0)"><path d="M0.5,16.3 H20" stroke="#2d4672" stroke-width="1.6"/><path d="M5.5,16 H14" stroke="#a9a9a9" stroke-width="1.8"/><path d="M5,16.5 V9.7 H14.6 V16.5" fill="none" stroke="#ff0a0a" stroke-width="1.7"/><path d="M17.3,5 V12" stroke="#ff0a0a" stroke-width="1.5"/><polygon points="14.8,6 19.8,6 17.3,2.4" fill="#ff0a0a"/></g><text x="673.9" y="140.6" font-size="15" fill="#1e2431" font-weight="normal" stroke="#f3f3f3" stroke-width="0.12" textLength="49.2" lengthAdjust="spacingAndGlyphs">Section</text><g transform="translate(749.0,73.0)"><rect x="0.6" y="0.6" width="11" height="13" fill="url(#gbl)" stroke="#2d4672" stroke-width="1"/><rect x="8.2" y="6" width="11" height="13" fill="url(#gbl)" stroke="#2d4672" stroke-width="1"/><path d="M4,4 L12,11" stroke="#ff0a0a" stroke-width="2.2"/><polygon points="15.5,14 8.5,12.8 13.5,8" fill="#ff0a0a"/></g><text x="771.1" y="88.8" font-size="15" fill="#1e2431" font-weight="normal" stroke="#f3f3f3" stroke-width="0.12" textLength="32.7" lengthAdjust="spacingAndGlyphs">Drag</text><g transform="translate(749.0,99.0)"><polygon points="5,1 19,1 15,7 1,7" fill="url(#gbl)" stroke="#2d4672" stroke-width="1"/><polygon points="5,13 19,13 15,19.4 0.6,19.4" fill="url(#gbl)" stroke="#2d4672" stroke-width="1"/><path d="M10.5,7.5 V13" stroke="#ff0a0a" stroke-width="2.4"/><polygon points="6.5,11.5 14.5,11.5 10.5,16.5" fill="#ff0a0a"/></g><text x="771.1" y="114.5" font-size="15" fill="#1e2431" font-weight="normal" stroke="#f3f3f3" stroke-width="0.12" textLength="35.5" lengthAdjust="spacingAndGlyphs">Layer</text><g transform="translate(749.0,125.0)"><rect x="0.6" y="1.5" width="10" height="11.5" fill="url(#gbl)" stroke="#2d4672" stroke-width="1"/><rect x="8.5" y="8" width="9.5" height="11.4" fill="url(#gbl)" stroke="#2d4672" stroke-width="1"/><circle cx="9.3" cy="1.6" r="1.5" fill="#ff0a0a"/><circle cx="18" cy="8" r="1.5" fill="#ff0a0a"/><path d="M11,2.5 L15.5,5.6" stroke="#ff0a0a" stroke-width="1.1" stroke-dasharray="1.6 1"/><polygon points="16.8,6.6 13.6,6 15.6,3.8" fill="#ff0a0a"/></g><text x="771.1" y="140.6" font-size="15" fill="#1e2431" font-weight="normal" stroke="#f3f3f3" stroke-width="0.12" textLength="53.4" lengthAdjust="spacingAndGlyphs">Relative</text><g transform="translate(833.0,73.0)"><polygon points="11.3,11.3 11.3,16.2 0.4,16.2" fill="url(#gbl)" stroke="#2d4672" stroke-width="0.9"/><polygon points="13.9,4.1 19.5,16.2 13.9,16.2" fill="#fdfdfd" stroke="#a9a9a9" stroke-width="0.9"/><path d="M11.3,4.6 Q7,4.4 7,8.6" fill="none" stroke="#ff0a0a" stroke-width="1.5"/><polygon points="4.9,7.6 9.1,7.6 7,10.8" fill="#ff0a0a"/></g><text x="854.8" y="88.8" font-size="15" fill="#1e2431" font-weight="normal" stroke="#f3f3f3" stroke-width="0.12" textLength="44.2" lengthAdjust="spacingAndGlyphs">Rotate</text><g transform="translate(833.0,99.0)"><polygon points="8.6,2 8.6,17.4 0.8,17.4" fill="url(#gbl)" stroke="#2d4672" stroke-width="0.9"/><polygon points="11.4,2 19.2,17.4 11.4,17.4" fill="#fdfdfd" stroke="#a9a9a9" stroke-width="0.9"/><path d="M8,11.5 H15.5" stroke="#ff0a0a" stroke-width="2.4"/><polygon points="9,7.6 9,15.4 4,11.5" fill="#ff0a0a"/></g><text x="854.8" y="114.5" font-size="15" fill="#1e2431" font-weight="normal" stroke="#f3f3f3" stroke-width="0.12" textLength="24.4" lengthAdjust="spacingAndGlyphs">Flip</text><g transform="translate(927.0,79.0)"><polygon points="0,0 38,0 22,15 22,30.6 15.2,30.6 15.2,15" fill="url(#gfun)" stroke="#9a9a9a" stroke-width="0.6"/><ellipse cx="19" cy="0.8" rx="18.6" ry="1.6" fill="#e9e9e9" stroke="#b0b0b0" stroke-width="0.5"/></g><text x="923.5" y="131.9" font-size="15" fill="#1e2431" font-weight="normal" stroke="#f3f3f3" stroke-width="0.12" textLength="45.3" lengthAdjust="spacingAndGlyphs">Object</text><text x="928.8" y="151.4" font-size="15" fill="#1e2431" font-weight="normal" stroke="#f3f3f3" stroke-width="0.12" textLength="34.2" lengthAdjust="spacingAndGlyphs">Filter</text><g transform="translate(973.0,73.0)"><rect x="0.6" y="0.6" width="18" height="18" fill="url(#gsq)" stroke="#2d4672" stroke-width="1"/><rect x="9.5" y="9.5" width="9.6" height="9.6" fill="#f6f7fd"/><path d="M9.5,19 V9.5 H19" fill="none" stroke="#1030ff" stroke-width="1.2"/><rect x="7.8" y="17" width="3.2" height="3.2" fill="#1030ff"/><rect x="16.6" y="7.8" width="3.2" height="3.2" fill="#1030ff"/><path d="M17.6,17.6 L13.5,13.5" stroke="#ff0a0a" stroke-width="2"/><polygon points="11.6,11.6 16.4,12.4 12.4,16.4" fill="#ff0a0a"/></g><text x="994.6" y="88.8" font-size="15" fill="#1e2431" font-weight="normal" stroke="#f3f3f3" stroke-width="0.12" textLength="56.8" lengthAdjust="spacingAndGlyphs">Reshape</text><g transform="translate(973.0,99.0)"><path d="M4,3 Q10,9 16,17" fill="none" stroke="#222" stroke-width="2.2" stroke-linecap="round"/><path d="M16,3 Q9,9 4.5,16.5" fill="none" stroke="#222" stroke-width="2.4" stroke-linecap="round"/></g><text x="994.6" y="114.5" font-size="15" fill="#1e2431" font-weight="normal" stroke="#f3f3f3" stroke-width="0.12" textLength="45.0" lengthAdjust="spacingAndGlyphs">Delete</text><g transform="translate(973.0,125.0)"><path d="M5,1.5 V16 L8.4,12.8 L11,18.6 L13.4,17.5 L10.8,11.9 L15.3,11.6 Z" fill="#fdfdfd" stroke="#8e98ad" stroke-width="1"/></g><text x="994.6" y="140.6" font-size="15" fill="#1e2431" font-weight="normal" stroke="#f3f3f3" stroke-width="0.12" textLength="41.1" lengthAdjust="spacingAndGlyphs">Select</text><polygon points="1040.8,131.8 1047.8,131.8 1044.3,135.8" fill="#3a3a3a"/><g transform="translate(1093.7,80.0)"><rect x="0.5" y="0.5" width="34" height="30.4" fill="url(#gwin)" stroke="#9fb0e0" stroke-width="1"/><rect x="0.5" y="0.5" width="34" height="5.6" fill="#3e6fe0"/><rect x="2.6" y="2.4" width="2.2" height="2.2" fill="#fff"/><path d="M5,13 H18.5 V21.3 H29.5" fill="none" stroke="#2d4672" stroke-width="1.9"/><path d="M5,17.6 H14.6 V25.6 H29.5" fill="none" stroke="#2d4672" stroke-width="1.9"/></g><text x="1076.4" y="131.9" font-size="15" fill="#1e2431" font-weight="normal" stroke="#f3f3f3" stroke-width="0.12" textLength="67.9" lengthAdjust="spacingAndGlyphs">Constraint</text><text x="1083.7" y="151.4" font-size="15" fill="#1e2431" font-weight="normal" stroke="#f3f3f3" stroke-width="0.12" textLength="54.1" lengthAdjust="spacingAndGlyphs">Browser</text><g transform="translate(1166.0,74.0)"><rect x="0.6" y="14.4" width="38.6" height="23.4" fill="#f2f3f6" stroke="#2d4672" stroke-width="1.3"/><path d="M0.6,22.2 H39.2" stroke="#2d4672" stroke-width="1.2"/><path d="M0.6,30.0 H39.2" stroke="#2d4672" stroke-width="1.2"/><path d="M19.9,14.4 V37.8" stroke="#2d4672" stroke-width="1.2"/><polygon points="3,21.5 25,21.5 36,14 14,14" fill="#4a4038" stroke="#2d4672" stroke-width="0.8"/><polygon points="3,15.5 25,15.5 36,8 14,8" fill="#b4bac6" stroke="#44597f" stroke-width="0.8"/><polygon points="3,9.5 25,9.5 36,2 14,2" fill="url(#ggr)" stroke="#44597f" stroke-width="0.8"/></g><text x="1147.9" y="131.9" font-size="15" fill="#1e2431" font-weight="normal" stroke="#f3f3f3" stroke-width="0.12" textLength="76.6" lengthAdjust="spacingAndGlyphs">Technology</text><text x="1159.0" y="151.4" font-size="15" fill="#1e2431" font-weight="normal" stroke="#f3f3f3" stroke-width="0.12" textLength="40.7" lengthAdjust="spacingAndGlyphs">Editor</text><polygon points="1203.0,143.8 1210.0,143.8 1206.5,147.8" fill="#3a3a3a"/><g transform="translate(1230.0,74.0)"><rect x="0.6" y="14.4" width="38.6" height="23.4" fill="#f2f3f6" stroke="#2d4672" stroke-width="1.3"/><path d="M0.6,22.2 H39.2" stroke="#2d4672" stroke-width="1.2"/><path d="M0.6,30.0 H39.2" stroke="#2d4672" stroke-width="1.2"/><path d="M19.9,14.4 V37.8" stroke="#2d4672" stroke-width="1.2"/><rect x="3" y="0" width="6" height="22" fill="#2d4672"/><rect x="30.6" y="0" width="6" height="22" fill="#2d4672"/><path d="M13,7.6 H27" stroke="#ff0a0a" stroke-width="1.6"/><polygon points="10.4,7.6 15,3.6 15,11.6" fill="#ff0a0a"/><polygon points="29.4,7.6 24.8,3.6 24.8,11.6" fill="#ff0a0a"/></g><text x="1234.6" y="131.9" font-size="15" fill="#1e2431" font-weight="normal" stroke="#f3f3f3" stroke-width="0.12" textLength="29.7" lengthAdjust="spacingAndGlyphs">Rule</text><text x="1230.0" y="151.4" font-size="15" fill="#1e2431" font-weight="normal" stroke="#f3f3f3" stroke-width="0.12" textLength="40.5" lengthAdjust="spacingAndGlyphs">Editor</text><g transform="translate(1288.0,74.0)"><rect x="0.6" y="14.4" width="38.6" height="23.4" fill="#f2f3f6" stroke="#2d4672" stroke-width="1.3"/><path d="M0.6,22.2 H39.2" stroke="#2d4672" stroke-width="1.2"/><path d="M0.6,30.0 H39.2" stroke="#2d4672" stroke-width="1.2"/><path d="M19.9,14.4 V37.8" stroke="#2d4672" stroke-width="1.2"/><text x="-0.5" y="12" font-size="12.5" font-weight="bold" fill="#1414f0" textLength="40.5" lengthAdjust="spacingAndGlyphs">Φ±0.00</text></g><text x="1275.9" y="131.9" font-size="15" fill="#1e2431" font-weight="normal" stroke="#f3f3f3" stroke-width="0.12" textLength="64.5" lengthAdjust="spacingAndGlyphs">Tolerance</text><text x="1280.7" y="151.4" font-size="15" fill="#1e2431" font-weight="normal" stroke="#f3f3f3" stroke-width="0.12" textLength="54.2" lengthAdjust="spacingAndGlyphs">Settings</text><g transform="translate(1366.0,74.0)"><path d="M4.2,10.5 V1 H30.6 V10.5" fill="none" stroke="#2d4672" stroke-width="1.8"/><path d="M4.2,29 V38.6 H30.6 V29" fill="none" stroke="#2d4672" stroke-width="1.8"/><text x="-0.6" y="26.4" font-size="15.4" font-weight="bold" fill="#ff0a14" textLength="35" lengthAdjust="spacingAndGlyphs">DRC</text></g><text x="1367.7" y="131.9" font-size="15" fill="#1e2431" font-weight="normal" stroke="#f3f3f3" stroke-width="0.12" textLength="30.1" lengthAdjust="spacingAndGlyphs">DRC</text><polygon points="1379.1,144.9 1386.1,144.9 1382.6,148.9" fill="#3a3a3a"/><g transform="translate(1412.0,74.0)"><path d="M23,23 L35,35" stroke="#8c8c9a" stroke-width="7.4" stroke-linecap="round"/><path d="M23.5,23.5 L34.6,34.6" stroke="url(#ghan)" stroke-width="5" stroke-linecap="round"/><circle cx="15" cy="15" r="13.4" fill="url(#glens)" stroke="#5a6a96" stroke-width="2"/><path d="M5.5,14.5 L11.5,21 L21,7.4" fill="none" stroke="#0a14f0" stroke-width="4.2"/></g><text x="1411.2" y="131.9" font-size="15" fill="#1e2431" font-weight="normal" stroke="#f3f3f3" stroke-width="0.12" textLength="41.1" lengthAdjust="spacingAndGlyphs">Check</text><text x="1408.6" y="151.4" font-size="15" fill="#1e2431" font-weight="normal" stroke="#f3f3f3" stroke-width="0.12" textLength="47.2" lengthAdjust="spacingAndGlyphs">Results</text></svg>
<svg class="abs" style="left:0;top:1004px" width="1763" height="33" viewBox="0 1004 1763 33" font-family='"Liberation Sans", sans-serif'><rect x="0" y="1003" width="1763" height="34" fill="#f0f0f0"/><rect x="0" y="1003" width="2" height="34" fill="#d8dce6"/><rect x="8.4" y="1011.6" width="18.8" height="20" fill="#fff" stroke="#1c3f94" stroke-width="2"/><text x="9.6" y="1028.6" font-size="16" font-weight="bold" fill="#16327a" textLength="16.4" lengthAdjust="spacingAndGlyphs">M</text><polygon points="35.0,1018.0 42.0,1018.0 38.5,1022.0" fill="#3a3a3a"/><rect x="63.3" y="1012" width="6" height="11.4" rx="3" fill="#51648f"/><path d="M61,1019.6 Q61,1026 66.3,1026 Q71.6,1026 71.6,1019.6" fill="none" stroke="#51648f" stroke-width="1.4"/><path d="M66.3,1026 V1030 M63,1030 H69.6" stroke="#51648f" stroke-width="1.4"/><rect x="85.5" y="1009" width="1" height="24" fill="#c4c4c4"/><rect x="86.5" y="1009" width="1" height="24" fill="#fcfcfc"/><rect x="106" y="1013.4" width="9.4" height="16.6" fill="#fdf6b2" stroke="#222" stroke-width="1.1"/><text x="123.4" y="1026.8" font-size="15.5" fill="#111" font-weight="normal" stroke="#f3f3f3" stroke-width="0.12" textLength="84.0" lengthAdjust="spacingAndGlyphs">Conductor-1</text><rect x="216.0" y="1009" width="1" height="24" fill="#c4c4c4"/><rect x="217.0" y="1009" width="1" height="24" fill="#fcfcfc"/><polygon points="231.4,1015 242.4,1015 238.2,1020.6 238.2,1027.4 235.6,1027.4 235.6,1020.6" fill="#3a78e0" stroke="#2a5cc0" stroke-width="0.6"/><text x="250.0" y="1026.8" font-size="15.5" fill="#111" font-weight="normal" stroke="#f3f3f3" stroke-width="0.12" textLength="64.3" lengthAdjust="spacingAndGlyphs">- All ON -</text><rect x="322.8" y="1009" width="1" height="24" fill="#c4c4c4"/><rect x="323.8" y="1009" width="1" height="24" fill="#fcfcfc"/><rect x="348.4" y="1009" width="1" height="24" fill="#c4c4c4"/><rect x="349.4" y="1009" width="1" height="24" fill="#fcfcfc"/><rect x="1220.4" y="1009" width="1" height="24" fill="#c4c4c4"/><rect x="1221.4" y="1009" width="1" height="24" fill="#fcfcfc"/><rect x="1227.5" y="1007.5" width="43.6" height="26.6" rx="2.5" fill="#a9cbf1" stroke="#3c8ad6" stroke-width="1.1"/><path d="M1253.2,1008 V1034" stroke="#3c8ad6" stroke-width="1"/><path d="M1231.6,1016.8 Q1240,1009.4 1248.4,1016.8" fill="none" stroke="#3a6cf0" stroke-width="2"/><path d="M1234.6,1020.8 Q1240,1016 1245.4,1020.8" fill="none" stroke="#3a6cf0" stroke-width="2"/><circle cx="1240" cy="1025.6" r="2" fill="#3a6cf0"/><polygon points="1258.2,1018.0 1265.2,1018.0 1261.7,1022.0" fill="#3a3a3a"/><rect x="1278.2" y="1009" width="1" height="24" fill="#c4c4c4"/><rect x="1279.2" y="1009" width="1" height="24" fill="#fcfcfc"/><rect x="1290.6" y="1013" width="16.4" height="17.4" rx="1.6" fill="#fff" stroke="#555" stroke-width="1.1"/><path d="M1293,1018 H1304.6 M1293,1021.4 H1304.6 M1293,1024.8 H1304.6 M1293,1028 H1304.6" stroke="#666" stroke-width="1"/><path d="M1293,1011.4 V1014.4 M1296,1011.4 V1014.4 M1299,1011.4 V1014.4 M1302,1011.4 V1014.4 M1305,1011.4 V1014.4" stroke="#444" stroke-width="1"/><rect x="1323.4" y="1012.6" width="12.6" height="18" fill="#c9cdd8" stroke="#555" stroke-width="1"/><rect x="1324.4" y="1013.4" width="5" height="6" fill="#e01010"/><path d="M1320,1015.6 H1323.4 M1320,1019.2 H1323.4 M1320,1022.8 H1323.4 M1320,1026.4 H1323.4 M1336,1015.6 H1339.6 M1336,1019.2 H1339.6 M1336,1022.8 H1339.6 M1336,1026.4 H1339.6" stroke="#555" stroke-width="1"/><path d="M1352.4,1012 L1368.4,1029.6" stroke="#e01010" stroke-width="2"/><path d="M1367.6,1012 L1358,1028 M1361,1013 L1364.6,1027.6" stroke="#1d2d55" stroke-width="1.6"/><circle cx="1357" cy="1029.4" r="2.2" fill="#1d2d55"/><circle cx="1369" cy="1030" r="2.2" fill="#e01010"/><circle cx="1363" cy="1030" r="1.8" fill="#1d2d55"/><polygon points="1383,1011.6 1392.4,1011.6 1392.4,1020.4 1401.8,1020.4 1401.8,1030.4 1383,1030.4" fill="#7ed321" stroke="#2a2a2a" stroke-width="1.1"/><polygon points="1409.0,1018.0 1416.0,1018.0 1412.5,1022.0" fill="#3a3a3a"/><circle cx="1433" cy="1015" r="2.6" fill="#fff" stroke="#2d4672" stroke-width="1.2"/><circle cx="1433" cy="1027" r="2.6" fill="#fff" stroke="#2d4672" stroke-width="1.2"/><path d="M1435.6,1015 H1439 L1443.4,1019.4 H1450.4" fill="none" stroke="#e01010" stroke-width="1.4"/><path d="M1435.6,1027 H1439 L1443.4,1022.8 H1450.4" fill="none" stroke="#2d4672" stroke-width="1.2"/><rect x="1459.5" y="1009" width="1" height="24" fill="#c4c4c4"/><rect x="1460.5" y="1009" width="1" height="24" fill="#fcfcfc"/><rect x="1471.4" y="1016" width="19.6" height="14" fill="#2f8f3a" stroke="#1d4d22" stroke-width="1"/><rect x="1474" y="1019" width="14.4" height="8.6" fill="#c8d820"/><rect x="1473.4" y="1011.6" width="6" height="4.6" fill="#8a1414"/><rect x="1483" y="1011.6" width="6" height="4.6" fill="#8a1414"/><rect x="1498.6" y="1007.5" width="26.8" height="26.6" rx="2.5" fill="#a9cbf1" stroke="#3c8ad6" stroke-width="1.1"/><path d="M1503.6,1015.6 V1027 Q1503.6,1030.6 1512,1030.6 Q1520.4,1030.6 1520.4,1027 V1015.6" fill="#fff" stroke="#2c4f9a" stroke-width="1.2"/><ellipse cx="1512" cy="1015.6" rx="8.4" ry="3.6" fill="#fff" stroke="#2c4f9a" stroke-width="1.2"/><rect x="1532.5" y="1009" width="1" height="24" fill="#c4c4c4"/><rect x="1533.5" y="1009" width="1" height="24" fill="#fcfcfc"/><text x="1541.8" y="1027.4" font-size="13.5" font-weight="bold" fill="#e81414" textLength="21.8" lengthAdjust="spacingAndGlyphs">DRC</text><polygon points="1569.5,1018.0 1576.5,1018.0 1573.0,1022.0" fill="#3a3a3a"/><rect x="1587.6" y="1007.5" width="44" height="26.6" rx="2.5" fill="#a9cbf1" stroke="#3c8ad6" stroke-width="1.1"/><path d="M1613,1008 V1034" stroke="#3c8ad6" stroke-width="1"/><text x="1590.6" y="1019.6" font-size="8.6" font-weight="bold" fill="#1a1a1a" textLength="19.6" lengthAdjust="spacingAndGlyphs">POST</text><path d="M1592.4,1024 L1597.4,1029.6 L1608,1019.4" fill="none" stroke="#e01010" stroke-width="2.6"/><polygon points="1618.0,1018.0 1625.0,1018.0 1621.5,1022.0" fill="#3a3a3a"/><rect x="1638.0" y="1009" width="1" height="24" fill="#c4c4c4"/><rect x="1639.0" y="1009" width="1" height="24" fill="#fcfcfc"/><path d="M1664,1011 L1657,1017.6 L1663,1021 L1656,1029.4" fill="none" stroke="#e01010" stroke-width="2.6"/><polygon points="1654,1027 1660,1031.6 1655,1032" fill="#e01010"/><polygon points="1675.8,1018.0 1682.8,1018.0 1679.3,1022.0" fill="#3a3a3a"/><rect x="1703.5" y="1009" width="62" height="24.4" fill="#fff" stroke="#7a7a7a" stroke-width="1"/><text x="1707.8" y="1026.8" font-size="16" fill="#111" font-weight="normal" stroke="#f3f3f3" stroke-width="0.12" textLength="37.0" lengthAdjust="spacingAndGlyphs">G0.1</text></svg>
</body></html>
